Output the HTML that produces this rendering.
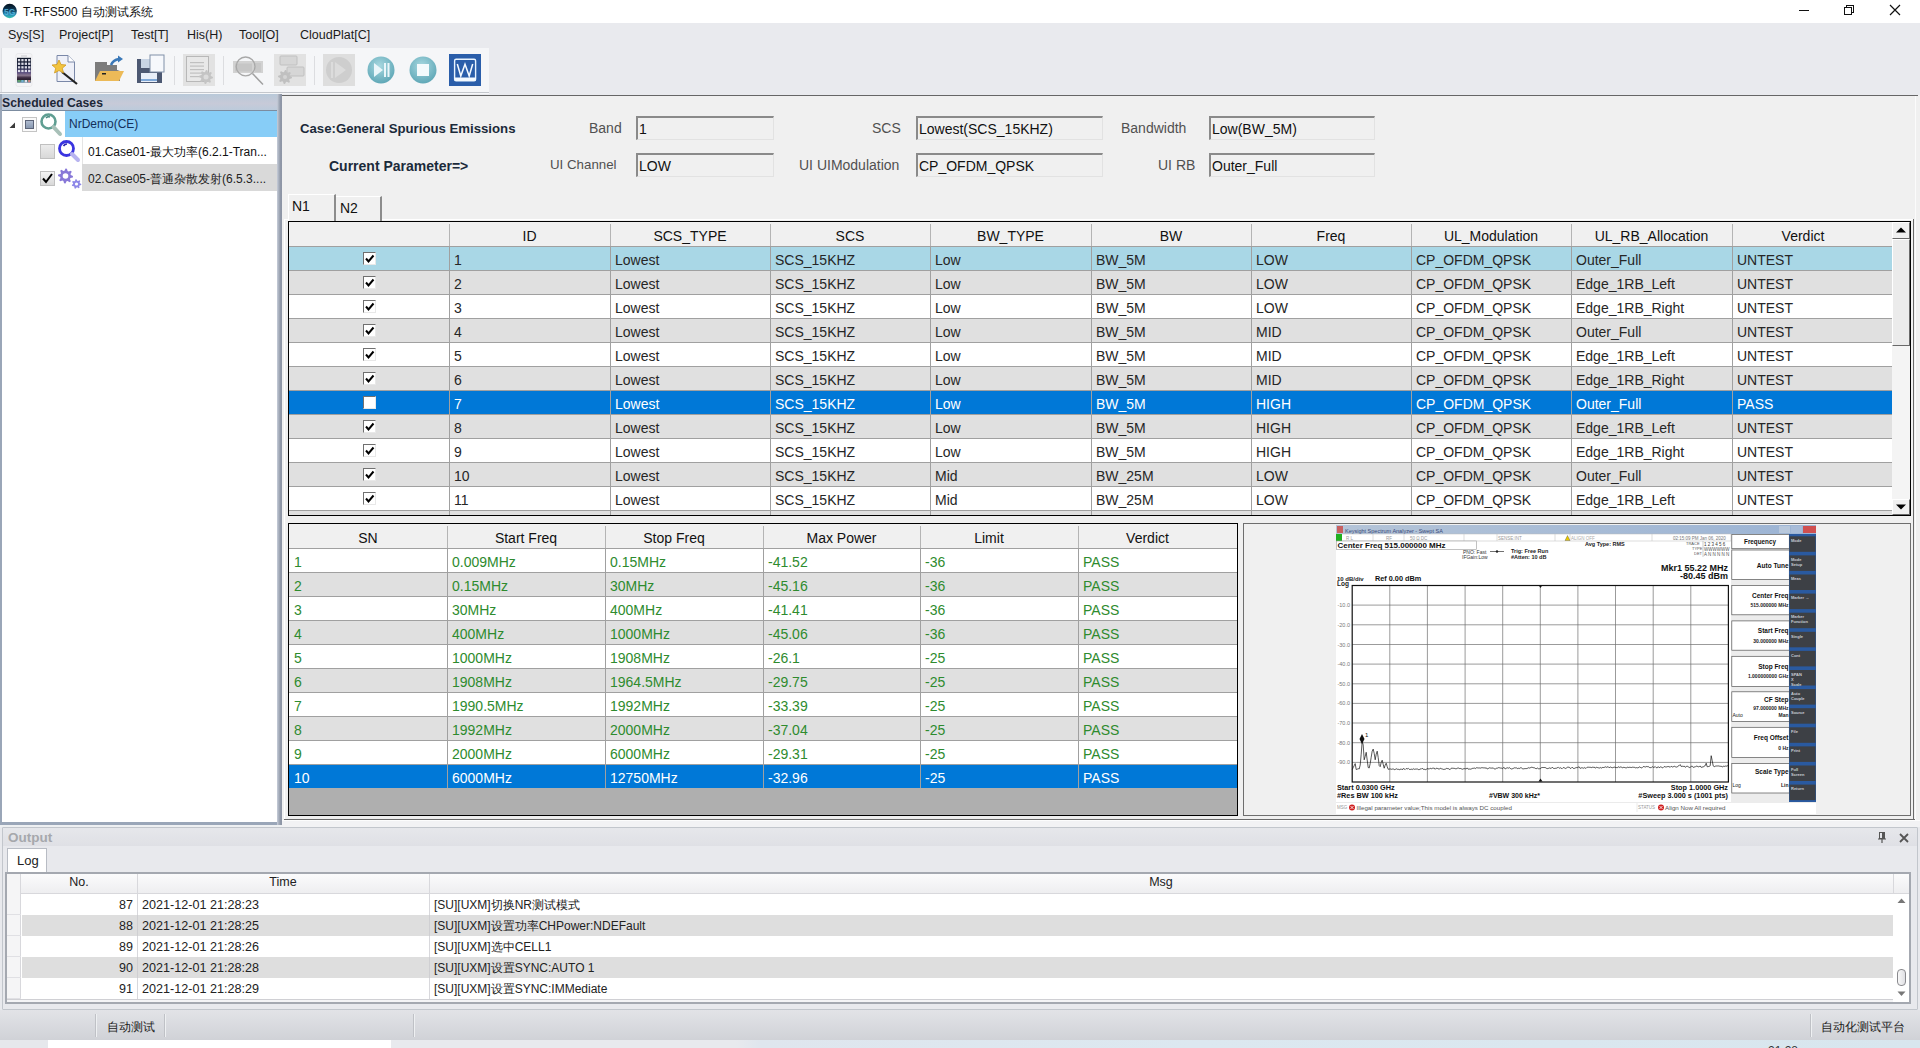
<!DOCTYPE html>
<html><head><meta charset="utf-8"><title>T-RFS500</title>
<style>
*{box-sizing:border-box}
html,body{margin:0;padding:0}
body{width:1920px;height:1048px;position:relative;overflow:hidden;background:#f0f0f0;font-family:"Liberation Sans", sans-serif;color:#000}
.ab{position:absolute}
.t{position:absolute;white-space:nowrap;line-height:1}
</style></head><body>

<div class="ab" style="left:0;top:0;width:1920px;height:23px;background:#fff"></div>
<svg class="ab" style="left:2px;top:3px" width="16" height="16"><defs><linearGradient id="tig" x1="0" y1="0" x2="0" y2="1"><stop offset="0" stop-color="#04101c"/><stop offset="0.45" stop-color="#0c3c5c"/><stop offset="0.75" stop-color="#2a90b8"/><stop offset="1" stop-color="#34c4b0"/></linearGradient></defs><circle cx="7.7" cy="8" r="7.2" fill="url(#tig)"/><text x="7.7" y="11.5" font-family="Liberation Sans" font-size="8.5" font-weight="bold" fill="#5ab8e0" text-anchor="middle" opacity="0.85">5G</text></svg>
<div class="t" style="left:23px;top:6px;font-size:12px;color:#111">T-RFS500 自动测试系统</div>
<div class="ab" style="left:1799px;top:10px;width:10px;height:1px;background:#111"></div>
<div class="ab" style="left:1846px;top:5px;width:8px;height:8px;border:1px solid #111"></div>
<div class="ab" style="left:1844px;top:7px;width:8px;height:8px;border:1px solid #111;background:#fff"></div>
<svg class="ab" style="left:1889px;top:4px" width="12" height="12"><path d="M1 1L11 11M11 1L1 11" stroke="#111" stroke-width="1.2"/></svg>
<div class="ab" style="left:0;top:23px;width:1920px;height:72px;background:#e9eaee"></div>
<div class="t" style="left:8px;top:29px;font-size:12.5px;color:#1a1a1a">Sys[S]</div>
<div class="t" style="left:59px;top:29px;font-size:12.5px;color:#1a1a1a">Project[P]</div>
<div class="t" style="left:131px;top:29px;font-size:12.5px;color:#1a1a1a">Test[T]</div>
<div class="t" style="left:187px;top:29px;font-size:12.5px;color:#1a1a1a">His(H)</div>
<div class="t" style="left:239px;top:29px;font-size:12.5px;color:#1a1a1a">Tool[O]</div>
<div class="t" style="left:300px;top:29px;font-size:12.5px;color:#1a1a1a">CloudPlat[C]</div>
<div class="ab" style="left:1px;top:48px;width:488px;height:44px;background:#f5f6f8;border-left:1px solid #dcdee2"></div>
<div class="ab" style="left:0;top:92px;width:489px;height:1px;background:#c4c7cc"></div>
<div class="ab" style="left:0;top:93px;width:489px;height:1px;background:#f6f7f9"></div>
<div class="ab" style="left:0;top:94px;width:282px;height:731px;background:#9aa6b8"></div>
<div class="ab" style="left:2px;top:94px;width:276px;height:16px;background:linear-gradient(#b9c9d9,#c7cad8 60%,#bccbdb)"></div>
<div class="t" style="left:2px;top:97px;font-size:12.2px;font-weight:bold;color:#1c2838">Scheduled Cases</div>
<div class="ab" style="left:2px;top:110px;width:276px;height:1px;background:#7c8ca0"></div>
<div class="ab" style="left:2px;top:111px;width:275px;height:711px;background:#fff"></div>
<div class="ab" style="left:277px;top:94px;width:5px;height:731px;background:linear-gradient(90deg,#c8ceda,#a4acba 40%,#9098a8 70%,#8c94a4)"></div>
<svg class="ab" style="left:9px;top:122px" width="7" height="7"><path d="M0.5 6L6 0.5L6 6Z" fill="#3a3a3a"/></svg>
<div class="ab" style="left:22px;top:117px;width:15px;height:15px;background:#fafafa;border:1px solid #c4c4c4"></div>
<div class="ab" style="left:25px;top:120px;width:9px;height:9px;background:linear-gradient(#b0bcd0,#8898b0);border:1px solid #5c6478"></div>
<svg class="ab" style="left:39px;top:112px" width="25" height="26"><circle cx="9.5" cy="9.5" r="7" stroke="#5f9e92" stroke-width="2.6" fill="#fff"/><path d="M7 6A4 4 0 0 1 11 5" stroke="#4a8a80" stroke-width="1.5" fill="none"/><path d="M14.5 15L21 22" stroke="#a8c0b8" stroke-width="4" stroke-linecap="round"/></svg>
<div class="ab" style="left:65px;top:111px;width:212px;height:26px;background:#87cdf7"></div>
<div class="t" style="left:69px;top:118px;font-size:12px;color:#14305a">NrDemo(CE)</div>
<div class="ab" style="left:40px;top:144px;width:15px;height:15px;background:linear-gradient(#ececec,#d8d8d8);border:1px solid #c0c0c0"></div>
<svg class="ab" style="left:57px;top:139px" width="25" height="25"><circle cx="9.5" cy="9.5" r="7" stroke="#3a34e0" stroke-width="2.8" fill="#fff"/><path d="M6.5 7A4 4 0 0 1 10 5" stroke="#2a24b0" stroke-width="1.6" fill="none"/><path d="M15 15L21 21" stroke="#b8b4f0" stroke-width="4" stroke-linecap="round"/></svg>
<div class="ab" style="left:82px;top:137px;width:1px;height:27px;background:#e4e4e4"></div>
<div class="t" style="left:88px;top:146px;font-size:12px;color:#111">01.Case01-最大功率(6.2.1-Tran...</div>
<div class="ab" style="left:40px;top:171px;width:15px;height:15px;background:linear-gradient(#f4f4f4,#d8d8d8);border:1px solid #c0c0c0"></div>
<svg class="ab" style="left:41px;top:172px" width="13" height="13"><path d="M2 6.5L5 10L11 2" stroke="#000" stroke-width="2" fill="none"/></svg>
<svg class="ab" style="left:56px;top:166px" width="26" height="26"><polygon points="17.00,10.00 16.86,11.46 14.49,12.07 13.99,13.00 14.80,15.30 13.67,16.24 11.57,14.99 10.55,15.30 9.50,17.50 8.04,17.36 7.43,14.99 6.50,14.49 4.20,15.30 3.26,14.17 4.51,12.07 4.20,11.05 2.00,10.00 2.14,8.54 4.51,7.93 5.01,7.00 4.20,4.70 5.33,3.76 7.43,5.01 8.45,4.70 9.50,2.50 10.96,2.64 11.57,5.01 12.50,5.51 14.80,4.70 15.74,5.83 14.49,7.93 14.80,8.95" fill="#8878d8"/><circle cx="9.5" cy="10" r="2.8" fill="#fff"/><polygon points="25.30,18.00 25.18,19.07 23.61,19.50 23.20,20.15 23.49,21.75 22.58,22.32 21.27,21.37 20.50,21.46 19.43,22.68 18.42,22.32 18.35,20.70 17.80,20.15 16.18,20.08 15.82,19.07 17.04,18.00 17.13,17.23 16.18,15.92 16.75,15.01 18.35,15.30 19.00,14.89 19.43,13.32 20.50,13.20 21.27,14.63 22.00,14.89 23.49,14.25 24.25,15.01 23.61,16.50 23.87,17.23" fill="#8e88e8"/><circle cx="20.5" cy="18" r="1.6" fill="#fff"/></svg>
<div class="ab" style="left:82px;top:164px;width:195px;height:27px;background:#d9d9d9"></div>
<div class="t" style="left:88px;top:173px;font-size:12px;color:#222">02.Case05-普通杂散发射(6.5.3....</div>
<svg class="ab" style="left:15px;top:52px" width="18" height="36"><defs><linearGradient id="phg" x1="0" y1="0" x2="0" y2="1"><stop offset="0" stop-color="#101828"/><stop offset="0.4" stop-color="#1c2240"/><stop offset="0.58" stop-color="#54487a"/><stop offset="0.7" stop-color="#8a7890"/><stop offset="0.8" stop-color="#3a2a40"/><stop offset="0.88" stop-color="#2a2030"/><stop offset="0.9" stop-color="#4a7a60"/><stop offset="1" stop-color="#7a90b0"/></linearGradient></defs><rect x="1" y="1.5" width="16" height="33" rx="2" fill="#f4f4f6" stroke="#e2e2e6" stroke-width="0.6"/><rect x="6" y="3.5" width="6" height="1" fill="#c8c8cc"/><rect x="2" y="5.8" width="14" height="25" fill="url(#phg)"/><rect x="2.9" y="7.0" width="2.3" height="2.3" fill="#f0f0f8" opacity="0.9"/><rect x="2.9" y="10.6" width="2.3" height="2.3" fill="#f0f0f8" opacity="0.9"/><rect x="2.9" y="14.2" width="2.3" height="2.3" fill="#f0f0f8" opacity="0.9"/><rect x="2.9" y="17.8" width="2.3" height="2.3" fill="#f0f0f8" opacity="0.9"/><rect x="6.3" y="7.0" width="2.3" height="2.3" fill="#f0f0f8" opacity="0.9"/><rect x="6.3" y="10.6" width="2.3" height="2.3" fill="#f0f0f8" opacity="0.9"/><rect x="6.3" y="14.2" width="2.3" height="2.3" fill="#f0f0f8" opacity="0.9"/><rect x="6.3" y="17.8" width="2.3" height="2.3" fill="#f0f0f8" opacity="0.9"/><rect x="9.7" y="7.0" width="2.3" height="2.3" fill="#f0f0f8" opacity="0.9"/><rect x="9.7" y="10.6" width="2.3" height="2.3" fill="#f0f0f8" opacity="0.9"/><rect x="9.7" y="14.2" width="2.3" height="2.3" fill="#f0f0f8" opacity="0.9"/><rect x="9.7" y="17.8" width="2.3" height="2.3" fill="#f0f0f8" opacity="0.9"/><rect x="13.1" y="7.0" width="2.3" height="2.3" fill="#f0f0f8" opacity="0.9"/><rect x="13.1" y="10.6" width="2.3" height="2.3" fill="#f0f0f8" opacity="0.9"/><rect x="13.1" y="14.2" width="2.3" height="2.3" fill="#f0f0f8" opacity="0.9"/><rect x="13.1" y="17.8" width="2.3" height="2.3" fill="#f0f0f8" opacity="0.9"/><rect x="2.9" y="28" width="2.3" height="2.3" fill="#60a070"/><rect x="6.3" y="28" width="2.3" height="2.3" fill="#70b0d0"/><rect x="9.7" y="28" width="2.3" height="2.3" fill="#e0e0f0"/><rect x="13.1" y="28" width="2.3" height="2.3" fill="#d08080"/></svg>
<svg class="ab" style="left:50px;top:53px" width="32" height="32"><path d="M7 2.5H18L24.5 9V28.5H7Z" fill="#eef0f8" stroke="#7a88a8" stroke-width="1"/><path d="M18 2.5V9H24.5" fill="#fff" stroke="#7a88a8" stroke-width="1"/><path d="M12 19L27 31" stroke="#222" stroke-width="2.2"/><path d="M9 7L11 11.5L16 12L12.3 15.2L13.5 20L9 17.5L4.5 20L5.7 15.2L2 12L7 11.5Z" fill="#f2c440" stroke="#d09a20" stroke-width="0.8"/></svg>
<svg class="ab" style="left:94px;top:54px" width="32" height="30"><path d="M1 8H13V11H23V17H1Z" fill="#7c7c7c"/><path d="M1 8V27H26V17Z" fill="#7c7c7c"/><path d="M1 27L6 17H30L25 27Z" fill="#ecba58"/><rect x="8" y="19" width="4" height="1.5" fill="#222"/><path d="M17 11Q19 6 25 5" stroke="#3a78b8" stroke-width="2.6" fill="none"/><path d="M24 1.5L29 5L24 8.5Z" fill="#3a78b8"/></svg>
<svg class="ab" style="left:136px;top:54px" width="30" height="30"><path d="M1 5H21L26 10V29H1Z" fill="#4c5872"/><rect x="5" y="5" width="12" height="9" fill="#c8d4e4"/><rect x="5" y="19" width="16" height="9" fill="#e8eef8"/><rect x="5" y="25" width="16" height="2" fill="#7ea8d8"/><rect x="14" y="1" width="14" height="17" fill="#f6f8fc" stroke="#8090a8" stroke-width="1"/></svg>
<div class="ab" style="left:174px;top:56px;width:1px;height:29px;background:#dcdde0"></div>
<div class="ab" style="left:223px;top:56px;width:1px;height:29px;background:#dcdde0"></div>
<div class="ab" style="left:314px;top:56px;width:1px;height:29px;background:#dcdde0"></div>
<svg class="ab" style="left:183px;top:54px" width="32" height="32"><rect x="0" y="0" width="32" height="32" fill="#e2e2e2"/><rect x="3.5" y="2.5" width="22" height="25" fill="#e8e8e8" stroke="#b8b8b8"/><rect x="7" y="8.0" width="14" height="1.2" fill="#c0c0c0"/><rect x="7" y="11.5" width="14" height="1.2" fill="#c0c0c0"/><rect x="7" y="15.0" width="14" height="1.2" fill="#c0c0c0"/><rect x="7" y="18.5" width="14" height="1.2" fill="#c0c0c0"/><rect x="7" y="22.0" width="14" height="1.2" fill="#c0c0c0"/><polygon points="30.00,23.00 29.87,24.37 27.66,24.93 27.19,25.80 27.95,27.95 26.89,28.82 24.93,27.66 23.98,27.94 23.00,30.00 21.63,29.87 21.07,27.66 20.20,27.19 18.05,27.95 17.18,26.89 18.34,24.93 18.06,23.98 16.00,23.00 16.13,21.63 18.34,21.07 18.81,20.20 18.05,18.05 19.11,17.18 21.07,18.34 22.02,18.06 23.00,16.00 24.37,16.13 24.93,18.34 25.80,18.81 27.95,18.05 28.82,19.11 27.66,21.07 27.94,22.02" fill="#c4c4c4"/><circle cx="23" cy="23" r="2.5" fill="#dcdcdc"/></svg>
<svg class="ab" style="left:232px;top:54px" width="32" height="32"><rect x="1" y="7" width="30" height="12" fill="#d2d2d2"/><rect x="3" y="9.5" width="17" height="8" fill="#c6c6c6"/><rect x="23" y="9" width="6" height="9" fill="#c8c8c8"/><circle cx="13.6" cy="12.4" r="9.4" stroke="#a8a8a8" stroke-width="1.3" fill="none"/><path d="M20.5 19.5L31 30.5" stroke="#a0a0a0" stroke-width="1.5"/></svg>
<svg class="ab" style="left:274px;top:54px" width="32" height="32"><rect x="0" y="0" width="32" height="32" fill="#e2e2e2"/><rect x="6" y="2" width="17" height="9" rx="1" fill="#d6d6d6" stroke="#c0c0c0"/><rect x="13" y="13" width="17" height="9" rx="1" fill="#d6d6d6" stroke="#c0c0c0"/><polygon points="18.00,23.00 17.87,24.37 15.66,24.93 15.19,25.80 15.95,27.95 14.89,28.82 12.93,27.66 11.98,27.94 11.00,30.00 9.63,29.87 9.07,27.66 8.20,27.19 6.05,27.95 5.18,26.89 6.34,24.93 6.06,23.98 4.00,23.00 4.13,21.63 6.34,21.07 6.81,20.20 6.05,18.05 7.11,17.18 9.07,18.34 10.02,18.06 11.00,16.00 12.37,16.13 12.93,18.34 13.80,18.81 15.95,18.05 16.82,19.11 15.66,21.07 15.94,22.02" fill="#c0c0c0"/><circle cx="11" cy="23" r="2" fill="#d4d4d4"/></svg>
<svg class="ab" style="left:323px;top:54px" width="32" height="32"><rect x="0" y="0" width="32" height="32" fill="#dedede"/><circle cx="16" cy="16" r="13" fill="#cecece"/><rect x="8" y="8" width="2" height="16" fill="#dcdcdc"/><path d="M12 8L23 16L12 24Z" fill="#dcdcdc"/></svg>
<svg class="ab" style="left:366px;top:55px" width="30" height="30"><defs><radialGradient id="tg" cx="0.45" cy="0.35" r="0.7"><stop offset="0" stop-color="#a8d8e0"/><stop offset="1" stop-color="#5aa4b4"/></radialGradient></defs><circle cx="15" cy="15" r="13.5" fill="url(#tg)"/><path d="M8 8L17 15L8 22Z" fill="#eaf6fa"/><rect x="18" y="8" width="2" height="14" fill="#eaf6fa"/><rect x="21.5" y="8" width="2" height="14" fill="#eaf6fa"/></svg>
<svg class="ab" style="left:408px;top:55px" width="30" height="30"><circle cx="15" cy="15" r="13.5" fill="url(#tg)"/><rect x="9" y="9" width="12" height="12" fill="#f4fafc"/></svg>
<svg class="ab" style="left:449px;top:54px" width="32" height="32"><rect x="0" y="0" width="32" height="32" fill="#2a5eaa"/><rect x="5.6" y="5.2" width="21" height="21.6" rx="1.5" fill="none" stroke="#e8f4ff" stroke-width="1.4"/><rect x="5.6" y="23.5" width="21" height="3.3" fill="#f4faff"/><path d="M8.3 10L11.8 22L16 10.2L20.2 22L23.7 10" stroke="#f4faff" stroke-width="1.5" fill="none"/></svg>
<div class="ab" style="left:282px;top:95px;width:1636px;height:732px;background:#f0f0f0;border-top:1px solid #666"></div>
<div class="ab" style="left:284px;top:219px;width:1630px;height:1px;background:#fff"></div>
<div class="ab" style="left:284px;top:219px;width:1px;height:600px;background:#fff"></div>
<div class="ab" style="left:1915px;top:96px;width:1px;height:724px;background:#fbfbfb"></div>
<div class="t" style="left:300px;top:122px;font-size:13.2px;font-weight:bold;color:#1b2a3a">Case:General Spurious Emissions</div>
<div class="t" style="left:329px;top:159px;font-size:14px;font-weight:bold;color:#1b2a3a">Current Parameter=&gt;</div>
<div class="t" style="left:589px;top:121px;font-size:14px;font-weight:normal;color:#505050">Band</div>
<div class="t" style="left:550px;top:158px;font-size:13.3px;font-weight:normal;color:#505050">UI Channel</div>
<div class="t" style="left:872px;top:121px;font-size:14px;font-weight:normal;color:#505050">SCS</div>
<div class="t" style="left:799px;top:158px;font-size:14px;font-weight:normal;color:#505050">UI UIModulation</div>
<div class="t" style="left:1121px;top:121px;font-size:14px;font-weight:normal;color:#505050">Bandwidth</div>
<div class="t" style="left:1158px;top:158px;font-size:14px;font-weight:normal;color:#505050">UI RB</div>
<div class="ab" style="left:636px;top:116px;width:138px;height:24px;background:#f0f0f0;border-top:2px solid #8a8a8a;border-left:2px solid #8a8a8a;border-right:1px solid #e2e2e2;border-bottom:1px solid #e2e2e2"></div>
<div class="t" style="left:639px;top:122px;font-size:14px;color:#111">1</div>
<div class="ab" style="left:636px;top:153px;width:138px;height:24px;background:#f0f0f0;border-top:2px solid #8a8a8a;border-left:2px solid #8a8a8a;border-right:1px solid #e2e2e2;border-bottom:1px solid #e2e2e2"></div>
<div class="t" style="left:639px;top:159px;font-size:14px;color:#111">LOW</div>
<div class="ab" style="left:916px;top:116px;width:187px;height:24px;background:#f0f0f0;border-top:2px solid #8a8a8a;border-left:2px solid #8a8a8a;border-right:1px solid #e2e2e2;border-bottom:1px solid #e2e2e2"></div>
<div class="t" style="left:919px;top:122px;font-size:14px;color:#111">Lowest(SCS_15KHZ)</div>
<div class="ab" style="left:916px;top:153px;width:187px;height:24px;background:#f0f0f0;border-top:2px solid #8a8a8a;border-left:2px solid #8a8a8a;border-right:1px solid #e2e2e2;border-bottom:1px solid #e2e2e2"></div>
<div class="t" style="left:919px;top:159px;font-size:14px;color:#111">CP_OFDM_QPSK</div>
<div class="ab" style="left:1209px;top:116px;width:166px;height:24px;background:#f0f0f0;border-top:2px solid #8a8a8a;border-left:2px solid #8a8a8a;border-right:1px solid #e2e2e2;border-bottom:1px solid #e2e2e2"></div>
<div class="t" style="left:1212px;top:122px;font-size:14px;color:#111">Low(BW_5M)</div>
<div class="ab" style="left:1209px;top:153px;width:166px;height:24px;background:#f0f0f0;border-top:2px solid #8a8a8a;border-left:2px solid #8a8a8a;border-right:1px solid #e2e2e2;border-bottom:1px solid #e2e2e2"></div>
<div class="t" style="left:1212px;top:159px;font-size:14px;color:#111">Outer_Full</div>
<div class="ab" style="left:288px;top:194px;width:48px;height:28px;background:#f0f0f0;border-top:1px solid #fff;border-left:1px solid #fff;border-right:2px solid #8c8c8c"></div>
<div class="t" style="left:292px;top:199px;font-size:14px;color:#111">N1</div>
<div class="ab" style="left:336px;top:196px;width:46px;height:25px;background:#f0f0f0;border-top:1px solid #fff;border-right:2px solid #8c8c8c"></div>
<div class="t" style="left:340px;top:201px;font-size:14px;color:#111">N2</div>
<div class="ab" style="left:288px;top:221px;width:1623px;height:295px;border:1px solid #000;background:#e0e0e0"></div>
<div class="ab" style="left:289px;top:222px;width:1603px;height:24px;background:#f0f0f0"></div>
<div class="ab" style="left:449px;top:224px;width:1px;height:22px;background:#b4b4b4"></div>
<div class="t" style="left:449px;width:161px;text-align:center;top:229px;font-size:14px;color:#111">ID</div>
<div class="ab" style="left:610px;top:224px;width:1px;height:22px;background:#b4b4b4"></div>
<div class="t" style="left:610px;width:160px;text-align:center;top:229px;font-size:14px;color:#111">SCS_TYPE</div>
<div class="ab" style="left:770px;top:224px;width:1px;height:22px;background:#b4b4b4"></div>
<div class="t" style="left:770px;width:160px;text-align:center;top:229px;font-size:14px;color:#111">SCS</div>
<div class="ab" style="left:930px;top:224px;width:1px;height:22px;background:#b4b4b4"></div>
<div class="t" style="left:930px;width:161px;text-align:center;top:229px;font-size:14px;color:#111">BW_TYPE</div>
<div class="ab" style="left:1091px;top:224px;width:1px;height:22px;background:#b4b4b4"></div>
<div class="t" style="left:1091px;width:160px;text-align:center;top:229px;font-size:14px;color:#111">BW</div>
<div class="ab" style="left:1251px;top:224px;width:1px;height:22px;background:#b4b4b4"></div>
<div class="t" style="left:1251px;width:160px;text-align:center;top:229px;font-size:14px;color:#111">Freq</div>
<div class="ab" style="left:1411px;top:224px;width:1px;height:22px;background:#b4b4b4"></div>
<div class="t" style="left:1411px;width:160px;text-align:center;top:229px;font-size:14px;color:#111">UL_Modulation</div>
<div class="ab" style="left:1571px;top:224px;width:1px;height:22px;background:#b4b4b4"></div>
<div class="t" style="left:1571px;width:161px;text-align:center;top:229px;font-size:14px;color:#111">UL_RB_Allocation</div>
<div class="ab" style="left:1732px;top:224px;width:1px;height:22px;background:#b4b4b4"></div>
<div class="t" style="left:1723px;width:160px;text-align:center;top:229px;font-size:14px;color:#111">Verdict</div>
<div class="ab" style="left:289px;top:246px;width:1603px;height:24px;background:#a9d7e6;border-top:1px solid #a0a0a0"></div>
<div class="ab" style="left:449px;top:246px;width:1px;height:24px;background:#a0a0a0"></div>
<div class="ab" style="left:610px;top:246px;width:1px;height:24px;background:#a0a0a0"></div>
<div class="ab" style="left:770px;top:246px;width:1px;height:24px;background:#a0a0a0"></div>
<div class="ab" style="left:930px;top:246px;width:1px;height:24px;background:#a0a0a0"></div>
<div class="ab" style="left:1091px;top:246px;width:1px;height:24px;background:#a0a0a0"></div>
<div class="ab" style="left:1251px;top:246px;width:1px;height:24px;background:#a0a0a0"></div>
<div class="ab" style="left:1411px;top:246px;width:1px;height:24px;background:#a0a0a0"></div>
<div class="ab" style="left:1571px;top:246px;width:1px;height:24px;background:#a0a0a0"></div>
<div class="ab" style="left:1732px;top:246px;width:1px;height:24px;background:#a0a0a0"></div>
<div class="ab" style="left:363px;top:252px;width:13px;height:13px;background:#fff;border-top:1px solid #707070;border-left:1px solid #707070;border-right:1px solid #e8e8e8;border-bottom:1px solid #e8e8e8"></div>
<svg class="ab" style="left:364px;top:253px" width="11" height="11"><path d="M2 5.5L4.5 8.5L9.5 2.5" stroke="#000" stroke-width="2" fill="none"/></svg>
<div class="t" style="left:454px;top:253px;font-size:14px;color:#262626">1</div>
<div class="t" style="left:615px;top:253px;font-size:14px;color:#262626">Lowest</div>
<div class="t" style="left:775px;top:253px;font-size:14px;color:#262626">SCS_15KHZ</div>
<div class="t" style="left:935px;top:253px;font-size:14px;color:#262626">Low</div>
<div class="t" style="left:1096px;top:253px;font-size:14px;color:#262626">BW_5M</div>
<div class="t" style="left:1256px;top:253px;font-size:14px;color:#262626">LOW</div>
<div class="t" style="left:1416px;top:253px;font-size:14px;color:#262626">CP_OFDM_QPSK</div>
<div class="t" style="left:1576px;top:253px;font-size:14px;color:#262626">Outer_Full</div>
<div class="t" style="left:1737px;top:253px;font-size:14px;color:#262626">UNTEST</div>
<div class="ab" style="left:289px;top:270px;width:1603px;height:24px;background:#e0e0e0;border-top:1px solid #a0a0a0"></div>
<div class="ab" style="left:449px;top:270px;width:1px;height:24px;background:#a0a0a0"></div>
<div class="ab" style="left:610px;top:270px;width:1px;height:24px;background:#a0a0a0"></div>
<div class="ab" style="left:770px;top:270px;width:1px;height:24px;background:#a0a0a0"></div>
<div class="ab" style="left:930px;top:270px;width:1px;height:24px;background:#a0a0a0"></div>
<div class="ab" style="left:1091px;top:270px;width:1px;height:24px;background:#a0a0a0"></div>
<div class="ab" style="left:1251px;top:270px;width:1px;height:24px;background:#a0a0a0"></div>
<div class="ab" style="left:1411px;top:270px;width:1px;height:24px;background:#a0a0a0"></div>
<div class="ab" style="left:1571px;top:270px;width:1px;height:24px;background:#a0a0a0"></div>
<div class="ab" style="left:1732px;top:270px;width:1px;height:24px;background:#a0a0a0"></div>
<div class="ab" style="left:363px;top:276px;width:13px;height:13px;background:#fff;border-top:1px solid #707070;border-left:1px solid #707070;border-right:1px solid #e8e8e8;border-bottom:1px solid #e8e8e8"></div>
<svg class="ab" style="left:364px;top:277px" width="11" height="11"><path d="M2 5.5L4.5 8.5L9.5 2.5" stroke="#000" stroke-width="2" fill="none"/></svg>
<div class="t" style="left:454px;top:277px;font-size:14px;color:#262626">2</div>
<div class="t" style="left:615px;top:277px;font-size:14px;color:#262626">Lowest</div>
<div class="t" style="left:775px;top:277px;font-size:14px;color:#262626">SCS_15KHZ</div>
<div class="t" style="left:935px;top:277px;font-size:14px;color:#262626">Low</div>
<div class="t" style="left:1096px;top:277px;font-size:14px;color:#262626">BW_5M</div>
<div class="t" style="left:1256px;top:277px;font-size:14px;color:#262626">LOW</div>
<div class="t" style="left:1416px;top:277px;font-size:14px;color:#262626">CP_OFDM_QPSK</div>
<div class="t" style="left:1576px;top:277px;font-size:14px;color:#262626">Edge_1RB_Left</div>
<div class="t" style="left:1737px;top:277px;font-size:14px;color:#262626">UNTEST</div>
<div class="ab" style="left:289px;top:294px;width:1603px;height:24px;background:#ffffff;border-top:1px solid #a0a0a0"></div>
<div class="ab" style="left:449px;top:294px;width:1px;height:24px;background:#a0a0a0"></div>
<div class="ab" style="left:610px;top:294px;width:1px;height:24px;background:#a0a0a0"></div>
<div class="ab" style="left:770px;top:294px;width:1px;height:24px;background:#a0a0a0"></div>
<div class="ab" style="left:930px;top:294px;width:1px;height:24px;background:#a0a0a0"></div>
<div class="ab" style="left:1091px;top:294px;width:1px;height:24px;background:#a0a0a0"></div>
<div class="ab" style="left:1251px;top:294px;width:1px;height:24px;background:#a0a0a0"></div>
<div class="ab" style="left:1411px;top:294px;width:1px;height:24px;background:#a0a0a0"></div>
<div class="ab" style="left:1571px;top:294px;width:1px;height:24px;background:#a0a0a0"></div>
<div class="ab" style="left:1732px;top:294px;width:1px;height:24px;background:#a0a0a0"></div>
<div class="ab" style="left:363px;top:300px;width:13px;height:13px;background:#fff;border-top:1px solid #707070;border-left:1px solid #707070;border-right:1px solid #e8e8e8;border-bottom:1px solid #e8e8e8"></div>
<svg class="ab" style="left:364px;top:301px" width="11" height="11"><path d="M2 5.5L4.5 8.5L9.5 2.5" stroke="#000" stroke-width="2" fill="none"/></svg>
<div class="t" style="left:454px;top:301px;font-size:14px;color:#262626">3</div>
<div class="t" style="left:615px;top:301px;font-size:14px;color:#262626">Lowest</div>
<div class="t" style="left:775px;top:301px;font-size:14px;color:#262626">SCS_15KHZ</div>
<div class="t" style="left:935px;top:301px;font-size:14px;color:#262626">Low</div>
<div class="t" style="left:1096px;top:301px;font-size:14px;color:#262626">BW_5M</div>
<div class="t" style="left:1256px;top:301px;font-size:14px;color:#262626">LOW</div>
<div class="t" style="left:1416px;top:301px;font-size:14px;color:#262626">CP_OFDM_QPSK</div>
<div class="t" style="left:1576px;top:301px;font-size:14px;color:#262626">Edge_1RB_Right</div>
<div class="t" style="left:1737px;top:301px;font-size:14px;color:#262626">UNTEST</div>
<div class="ab" style="left:289px;top:318px;width:1603px;height:24px;background:#e0e0e0;border-top:1px solid #a0a0a0"></div>
<div class="ab" style="left:449px;top:318px;width:1px;height:24px;background:#a0a0a0"></div>
<div class="ab" style="left:610px;top:318px;width:1px;height:24px;background:#a0a0a0"></div>
<div class="ab" style="left:770px;top:318px;width:1px;height:24px;background:#a0a0a0"></div>
<div class="ab" style="left:930px;top:318px;width:1px;height:24px;background:#a0a0a0"></div>
<div class="ab" style="left:1091px;top:318px;width:1px;height:24px;background:#a0a0a0"></div>
<div class="ab" style="left:1251px;top:318px;width:1px;height:24px;background:#a0a0a0"></div>
<div class="ab" style="left:1411px;top:318px;width:1px;height:24px;background:#a0a0a0"></div>
<div class="ab" style="left:1571px;top:318px;width:1px;height:24px;background:#a0a0a0"></div>
<div class="ab" style="left:1732px;top:318px;width:1px;height:24px;background:#a0a0a0"></div>
<div class="ab" style="left:363px;top:324px;width:13px;height:13px;background:#fff;border-top:1px solid #707070;border-left:1px solid #707070;border-right:1px solid #e8e8e8;border-bottom:1px solid #e8e8e8"></div>
<svg class="ab" style="left:364px;top:325px" width="11" height="11"><path d="M2 5.5L4.5 8.5L9.5 2.5" stroke="#000" stroke-width="2" fill="none"/></svg>
<div class="t" style="left:454px;top:325px;font-size:14px;color:#262626">4</div>
<div class="t" style="left:615px;top:325px;font-size:14px;color:#262626">Lowest</div>
<div class="t" style="left:775px;top:325px;font-size:14px;color:#262626">SCS_15KHZ</div>
<div class="t" style="left:935px;top:325px;font-size:14px;color:#262626">Low</div>
<div class="t" style="left:1096px;top:325px;font-size:14px;color:#262626">BW_5M</div>
<div class="t" style="left:1256px;top:325px;font-size:14px;color:#262626">MID</div>
<div class="t" style="left:1416px;top:325px;font-size:14px;color:#262626">CP_OFDM_QPSK</div>
<div class="t" style="left:1576px;top:325px;font-size:14px;color:#262626">Outer_Full</div>
<div class="t" style="left:1737px;top:325px;font-size:14px;color:#262626">UNTEST</div>
<div class="ab" style="left:289px;top:342px;width:1603px;height:24px;background:#ffffff;border-top:1px solid #a0a0a0"></div>
<div class="ab" style="left:449px;top:342px;width:1px;height:24px;background:#a0a0a0"></div>
<div class="ab" style="left:610px;top:342px;width:1px;height:24px;background:#a0a0a0"></div>
<div class="ab" style="left:770px;top:342px;width:1px;height:24px;background:#a0a0a0"></div>
<div class="ab" style="left:930px;top:342px;width:1px;height:24px;background:#a0a0a0"></div>
<div class="ab" style="left:1091px;top:342px;width:1px;height:24px;background:#a0a0a0"></div>
<div class="ab" style="left:1251px;top:342px;width:1px;height:24px;background:#a0a0a0"></div>
<div class="ab" style="left:1411px;top:342px;width:1px;height:24px;background:#a0a0a0"></div>
<div class="ab" style="left:1571px;top:342px;width:1px;height:24px;background:#a0a0a0"></div>
<div class="ab" style="left:1732px;top:342px;width:1px;height:24px;background:#a0a0a0"></div>
<div class="ab" style="left:363px;top:348px;width:13px;height:13px;background:#fff;border-top:1px solid #707070;border-left:1px solid #707070;border-right:1px solid #e8e8e8;border-bottom:1px solid #e8e8e8"></div>
<svg class="ab" style="left:364px;top:349px" width="11" height="11"><path d="M2 5.5L4.5 8.5L9.5 2.5" stroke="#000" stroke-width="2" fill="none"/></svg>
<div class="t" style="left:454px;top:349px;font-size:14px;color:#262626">5</div>
<div class="t" style="left:615px;top:349px;font-size:14px;color:#262626">Lowest</div>
<div class="t" style="left:775px;top:349px;font-size:14px;color:#262626">SCS_15KHZ</div>
<div class="t" style="left:935px;top:349px;font-size:14px;color:#262626">Low</div>
<div class="t" style="left:1096px;top:349px;font-size:14px;color:#262626">BW_5M</div>
<div class="t" style="left:1256px;top:349px;font-size:14px;color:#262626">MID</div>
<div class="t" style="left:1416px;top:349px;font-size:14px;color:#262626">CP_OFDM_QPSK</div>
<div class="t" style="left:1576px;top:349px;font-size:14px;color:#262626">Edge_1RB_Left</div>
<div class="t" style="left:1737px;top:349px;font-size:14px;color:#262626">UNTEST</div>
<div class="ab" style="left:289px;top:366px;width:1603px;height:24px;background:#e0e0e0;border-top:1px solid #a0a0a0"></div>
<div class="ab" style="left:449px;top:366px;width:1px;height:24px;background:#a0a0a0"></div>
<div class="ab" style="left:610px;top:366px;width:1px;height:24px;background:#a0a0a0"></div>
<div class="ab" style="left:770px;top:366px;width:1px;height:24px;background:#a0a0a0"></div>
<div class="ab" style="left:930px;top:366px;width:1px;height:24px;background:#a0a0a0"></div>
<div class="ab" style="left:1091px;top:366px;width:1px;height:24px;background:#a0a0a0"></div>
<div class="ab" style="left:1251px;top:366px;width:1px;height:24px;background:#a0a0a0"></div>
<div class="ab" style="left:1411px;top:366px;width:1px;height:24px;background:#a0a0a0"></div>
<div class="ab" style="left:1571px;top:366px;width:1px;height:24px;background:#a0a0a0"></div>
<div class="ab" style="left:1732px;top:366px;width:1px;height:24px;background:#a0a0a0"></div>
<div class="ab" style="left:363px;top:372px;width:13px;height:13px;background:#fff;border-top:1px solid #707070;border-left:1px solid #707070;border-right:1px solid #e8e8e8;border-bottom:1px solid #e8e8e8"></div>
<svg class="ab" style="left:364px;top:373px" width="11" height="11"><path d="M2 5.5L4.5 8.5L9.5 2.5" stroke="#000" stroke-width="2" fill="none"/></svg>
<div class="t" style="left:454px;top:373px;font-size:14px;color:#262626">6</div>
<div class="t" style="left:615px;top:373px;font-size:14px;color:#262626">Lowest</div>
<div class="t" style="left:775px;top:373px;font-size:14px;color:#262626">SCS_15KHZ</div>
<div class="t" style="left:935px;top:373px;font-size:14px;color:#262626">Low</div>
<div class="t" style="left:1096px;top:373px;font-size:14px;color:#262626">BW_5M</div>
<div class="t" style="left:1256px;top:373px;font-size:14px;color:#262626">MID</div>
<div class="t" style="left:1416px;top:373px;font-size:14px;color:#262626">CP_OFDM_QPSK</div>
<div class="t" style="left:1576px;top:373px;font-size:14px;color:#262626">Edge_1RB_Right</div>
<div class="t" style="left:1737px;top:373px;font-size:14px;color:#262626">UNTEST</div>
<div class="ab" style="left:289px;top:390px;width:1603px;height:24px;background:#0078d7;border-top:1px solid #a0a0a0"></div>
<div class="ab" style="left:449px;top:390px;width:1px;height:24px;background:#a0a0a0"></div>
<div class="ab" style="left:610px;top:390px;width:1px;height:24px;background:#a0a0a0"></div>
<div class="ab" style="left:770px;top:390px;width:1px;height:24px;background:#a0a0a0"></div>
<div class="ab" style="left:930px;top:390px;width:1px;height:24px;background:#a0a0a0"></div>
<div class="ab" style="left:1091px;top:390px;width:1px;height:24px;background:#a0a0a0"></div>
<div class="ab" style="left:1251px;top:390px;width:1px;height:24px;background:#a0a0a0"></div>
<div class="ab" style="left:1411px;top:390px;width:1px;height:24px;background:#a0a0a0"></div>
<div class="ab" style="left:1571px;top:390px;width:1px;height:24px;background:#a0a0a0"></div>
<div class="ab" style="left:1732px;top:390px;width:1px;height:24px;background:#a0a0a0"></div>
<div class="ab" style="left:363px;top:396px;width:13px;height:13px;background:#fff;border-top:1px solid #707070;border-left:1px solid #707070;border-right:1px solid #e8e8e8;border-bottom:1px solid #e8e8e8"></div>
<div class="t" style="left:454px;top:397px;font-size:14px;color:#ffffff">7</div>
<div class="t" style="left:615px;top:397px;font-size:14px;color:#ffffff">Lowest</div>
<div class="t" style="left:775px;top:397px;font-size:14px;color:#ffffff">SCS_15KHZ</div>
<div class="t" style="left:935px;top:397px;font-size:14px;color:#ffffff">Low</div>
<div class="t" style="left:1096px;top:397px;font-size:14px;color:#ffffff">BW_5M</div>
<div class="t" style="left:1256px;top:397px;font-size:14px;color:#ffffff">HIGH</div>
<div class="t" style="left:1416px;top:397px;font-size:14px;color:#ffffff">CP_OFDM_QPSK</div>
<div class="t" style="left:1576px;top:397px;font-size:14px;color:#ffffff">Outer_Full</div>
<div class="t" style="left:1737px;top:397px;font-size:14px;color:#ffffff">PASS</div>
<div class="ab" style="left:289px;top:414px;width:1603px;height:24px;background:#e0e0e0;border-top:1px solid #a0a0a0"></div>
<div class="ab" style="left:449px;top:414px;width:1px;height:24px;background:#a0a0a0"></div>
<div class="ab" style="left:610px;top:414px;width:1px;height:24px;background:#a0a0a0"></div>
<div class="ab" style="left:770px;top:414px;width:1px;height:24px;background:#a0a0a0"></div>
<div class="ab" style="left:930px;top:414px;width:1px;height:24px;background:#a0a0a0"></div>
<div class="ab" style="left:1091px;top:414px;width:1px;height:24px;background:#a0a0a0"></div>
<div class="ab" style="left:1251px;top:414px;width:1px;height:24px;background:#a0a0a0"></div>
<div class="ab" style="left:1411px;top:414px;width:1px;height:24px;background:#a0a0a0"></div>
<div class="ab" style="left:1571px;top:414px;width:1px;height:24px;background:#a0a0a0"></div>
<div class="ab" style="left:1732px;top:414px;width:1px;height:24px;background:#a0a0a0"></div>
<div class="ab" style="left:363px;top:420px;width:13px;height:13px;background:#fff;border-top:1px solid #707070;border-left:1px solid #707070;border-right:1px solid #e8e8e8;border-bottom:1px solid #e8e8e8"></div>
<svg class="ab" style="left:364px;top:421px" width="11" height="11"><path d="M2 5.5L4.5 8.5L9.5 2.5" stroke="#000" stroke-width="2" fill="none"/></svg>
<div class="t" style="left:454px;top:421px;font-size:14px;color:#262626">8</div>
<div class="t" style="left:615px;top:421px;font-size:14px;color:#262626">Lowest</div>
<div class="t" style="left:775px;top:421px;font-size:14px;color:#262626">SCS_15KHZ</div>
<div class="t" style="left:935px;top:421px;font-size:14px;color:#262626">Low</div>
<div class="t" style="left:1096px;top:421px;font-size:14px;color:#262626">BW_5M</div>
<div class="t" style="left:1256px;top:421px;font-size:14px;color:#262626">HIGH</div>
<div class="t" style="left:1416px;top:421px;font-size:14px;color:#262626">CP_OFDM_QPSK</div>
<div class="t" style="left:1576px;top:421px;font-size:14px;color:#262626">Edge_1RB_Left</div>
<div class="t" style="left:1737px;top:421px;font-size:14px;color:#262626">UNTEST</div>
<div class="ab" style="left:289px;top:438px;width:1603px;height:24px;background:#ffffff;border-top:1px solid #a0a0a0"></div>
<div class="ab" style="left:449px;top:438px;width:1px;height:24px;background:#a0a0a0"></div>
<div class="ab" style="left:610px;top:438px;width:1px;height:24px;background:#a0a0a0"></div>
<div class="ab" style="left:770px;top:438px;width:1px;height:24px;background:#a0a0a0"></div>
<div class="ab" style="left:930px;top:438px;width:1px;height:24px;background:#a0a0a0"></div>
<div class="ab" style="left:1091px;top:438px;width:1px;height:24px;background:#a0a0a0"></div>
<div class="ab" style="left:1251px;top:438px;width:1px;height:24px;background:#a0a0a0"></div>
<div class="ab" style="left:1411px;top:438px;width:1px;height:24px;background:#a0a0a0"></div>
<div class="ab" style="left:1571px;top:438px;width:1px;height:24px;background:#a0a0a0"></div>
<div class="ab" style="left:1732px;top:438px;width:1px;height:24px;background:#a0a0a0"></div>
<div class="ab" style="left:363px;top:444px;width:13px;height:13px;background:#fff;border-top:1px solid #707070;border-left:1px solid #707070;border-right:1px solid #e8e8e8;border-bottom:1px solid #e8e8e8"></div>
<svg class="ab" style="left:364px;top:445px" width="11" height="11"><path d="M2 5.5L4.5 8.5L9.5 2.5" stroke="#000" stroke-width="2" fill="none"/></svg>
<div class="t" style="left:454px;top:445px;font-size:14px;color:#262626">9</div>
<div class="t" style="left:615px;top:445px;font-size:14px;color:#262626">Lowest</div>
<div class="t" style="left:775px;top:445px;font-size:14px;color:#262626">SCS_15KHZ</div>
<div class="t" style="left:935px;top:445px;font-size:14px;color:#262626">Low</div>
<div class="t" style="left:1096px;top:445px;font-size:14px;color:#262626">BW_5M</div>
<div class="t" style="left:1256px;top:445px;font-size:14px;color:#262626">HIGH</div>
<div class="t" style="left:1416px;top:445px;font-size:14px;color:#262626">CP_OFDM_QPSK</div>
<div class="t" style="left:1576px;top:445px;font-size:14px;color:#262626">Edge_1RB_Right</div>
<div class="t" style="left:1737px;top:445px;font-size:14px;color:#262626">UNTEST</div>
<div class="ab" style="left:289px;top:462px;width:1603px;height:24px;background:#e0e0e0;border-top:1px solid #a0a0a0"></div>
<div class="ab" style="left:449px;top:462px;width:1px;height:24px;background:#a0a0a0"></div>
<div class="ab" style="left:610px;top:462px;width:1px;height:24px;background:#a0a0a0"></div>
<div class="ab" style="left:770px;top:462px;width:1px;height:24px;background:#a0a0a0"></div>
<div class="ab" style="left:930px;top:462px;width:1px;height:24px;background:#a0a0a0"></div>
<div class="ab" style="left:1091px;top:462px;width:1px;height:24px;background:#a0a0a0"></div>
<div class="ab" style="left:1251px;top:462px;width:1px;height:24px;background:#a0a0a0"></div>
<div class="ab" style="left:1411px;top:462px;width:1px;height:24px;background:#a0a0a0"></div>
<div class="ab" style="left:1571px;top:462px;width:1px;height:24px;background:#a0a0a0"></div>
<div class="ab" style="left:1732px;top:462px;width:1px;height:24px;background:#a0a0a0"></div>
<div class="ab" style="left:363px;top:468px;width:13px;height:13px;background:#fff;border-top:1px solid #707070;border-left:1px solid #707070;border-right:1px solid #e8e8e8;border-bottom:1px solid #e8e8e8"></div>
<svg class="ab" style="left:364px;top:469px" width="11" height="11"><path d="M2 5.5L4.5 8.5L9.5 2.5" stroke="#000" stroke-width="2" fill="none"/></svg>
<div class="t" style="left:454px;top:469px;font-size:14px;color:#262626">10</div>
<div class="t" style="left:615px;top:469px;font-size:14px;color:#262626">Lowest</div>
<div class="t" style="left:775px;top:469px;font-size:14px;color:#262626">SCS_15KHZ</div>
<div class="t" style="left:935px;top:469px;font-size:14px;color:#262626">Mid</div>
<div class="t" style="left:1096px;top:469px;font-size:14px;color:#262626">BW_25M</div>
<div class="t" style="left:1256px;top:469px;font-size:14px;color:#262626">LOW</div>
<div class="t" style="left:1416px;top:469px;font-size:14px;color:#262626">CP_OFDM_QPSK</div>
<div class="t" style="left:1576px;top:469px;font-size:14px;color:#262626">Outer_Full</div>
<div class="t" style="left:1737px;top:469px;font-size:14px;color:#262626">UNTEST</div>
<div class="ab" style="left:289px;top:486px;width:1603px;height:24px;background:#ffffff;border-top:1px solid #a0a0a0"></div>
<div class="ab" style="left:449px;top:486px;width:1px;height:24px;background:#a0a0a0"></div>
<div class="ab" style="left:610px;top:486px;width:1px;height:24px;background:#a0a0a0"></div>
<div class="ab" style="left:770px;top:486px;width:1px;height:24px;background:#a0a0a0"></div>
<div class="ab" style="left:930px;top:486px;width:1px;height:24px;background:#a0a0a0"></div>
<div class="ab" style="left:1091px;top:486px;width:1px;height:24px;background:#a0a0a0"></div>
<div class="ab" style="left:1251px;top:486px;width:1px;height:24px;background:#a0a0a0"></div>
<div class="ab" style="left:1411px;top:486px;width:1px;height:24px;background:#a0a0a0"></div>
<div class="ab" style="left:1571px;top:486px;width:1px;height:24px;background:#a0a0a0"></div>
<div class="ab" style="left:1732px;top:486px;width:1px;height:24px;background:#a0a0a0"></div>
<div class="ab" style="left:363px;top:492px;width:13px;height:13px;background:#fff;border-top:1px solid #707070;border-left:1px solid #707070;border-right:1px solid #e8e8e8;border-bottom:1px solid #e8e8e8"></div>
<svg class="ab" style="left:364px;top:493px" width="11" height="11"><path d="M2 5.5L4.5 8.5L9.5 2.5" stroke="#000" stroke-width="2" fill="none"/></svg>
<div class="t" style="left:454px;top:493px;font-size:14px;color:#262626">11</div>
<div class="t" style="left:615px;top:493px;font-size:14px;color:#262626">Lowest</div>
<div class="t" style="left:775px;top:493px;font-size:14px;color:#262626">SCS_15KHZ</div>
<div class="t" style="left:935px;top:493px;font-size:14px;color:#262626">Mid</div>
<div class="t" style="left:1096px;top:493px;font-size:14px;color:#262626">BW_25M</div>
<div class="t" style="left:1256px;top:493px;font-size:14px;color:#262626">LOW</div>
<div class="t" style="left:1416px;top:493px;font-size:14px;color:#262626">CP_OFDM_QPSK</div>
<div class="t" style="left:1576px;top:493px;font-size:14px;color:#262626">Edge_1RB_Left</div>
<div class="t" style="left:1737px;top:493px;font-size:14px;color:#262626">UNTEST</div>
<div class="ab" style="left:289px;top:510px;width:1603px;height:5px;background:#e0e0e0;border-top:1px solid #a0a0a0"></div>
<div class="ab" style="left:449px;top:510px;width:1px;height:5px;background:#a0a0a0"></div>
<div class="ab" style="left:610px;top:510px;width:1px;height:5px;background:#a0a0a0"></div>
<div class="ab" style="left:770px;top:510px;width:1px;height:5px;background:#a0a0a0"></div>
<div class="ab" style="left:930px;top:510px;width:1px;height:5px;background:#a0a0a0"></div>
<div class="ab" style="left:1091px;top:510px;width:1px;height:5px;background:#a0a0a0"></div>
<div class="ab" style="left:1251px;top:510px;width:1px;height:5px;background:#a0a0a0"></div>
<div class="ab" style="left:1411px;top:510px;width:1px;height:5px;background:#a0a0a0"></div>
<div class="ab" style="left:1571px;top:510px;width:1px;height:5px;background:#a0a0a0"></div>
<div class="ab" style="left:1732px;top:510px;width:1px;height:5px;background:#a0a0a0"></div>
<div class="ab" style="left:1892px;top:222px;width:18px;height:293px;background:#f4f4f4"></div>
<div class="ab" style="left:1892px;top:222px;width:18px;height:17px;background:#f0f0f0;border-right:1px solid #696969;border-bottom:1px solid #696969;border-left:1px solid #fff;border-top:1px solid #fff"></div>
<svg class="ab" style="left:1896px;top:227px" width="10" height="6"><path d="M0 5.5L5 0.5L10 5.5Z" fill="#000"/></svg>
<div class="ab" style="left:1892px;top:239px;width:18px;height:107px;background:#ebebeb;border-right:1px solid #696969;border-bottom:1px solid #696969;border-left:1px solid #fff;border-top:1px solid #fff"></div>
<div class="ab" style="left:1892px;top:499px;width:18px;height:16px;background:#f0f0f0;border-right:1px solid #696969;border-bottom:1px solid #696969;border-left:1px solid #fff;border-top:1px solid #fff"></div>
<svg class="ab" style="left:1896px;top:504px" width="10" height="6"><path d="M0 0.5L5 5.5L10 0.5Z" fill="#000"/></svg>
<div class="ab" style="left:288px;top:523px;width:950px;height:293px;border:1px solid #000;background:#afafaf"></div>
<div class="ab" style="left:289px;top:524px;width:948px;height:24px;background:#f0f0f0"></div>
<div class="t" style="left:289px;width:158px;text-align:center;top:531px;font-size:14px;color:#111">SN</div>
<div class="ab" style="left:447px;top:526px;width:1px;height:22px;background:#b4b4b4"></div>
<div class="t" style="left:447px;width:158px;text-align:center;top:531px;font-size:14px;color:#111">Start Freq</div>
<div class="ab" style="left:605px;top:526px;width:1px;height:22px;background:#b4b4b4"></div>
<div class="t" style="left:595px;width:158px;text-align:center;top:531px;font-size:14px;color:#111">Stop Freq</div>
<div class="ab" style="left:763px;top:526px;width:1px;height:22px;background:#b4b4b4"></div>
<div class="t" style="left:763px;width:157px;text-align:center;top:531px;font-size:14px;color:#111">Max Power</div>
<div class="ab" style="left:920px;top:526px;width:1px;height:22px;background:#b4b4b4"></div>
<div class="t" style="left:910px;width:158px;text-align:center;top:531px;font-size:14px;color:#111">Limit</div>
<div class="ab" style="left:1078px;top:526px;width:1px;height:22px;background:#b4b4b4"></div>
<div class="t" style="left:1068px;width:159px;text-align:center;top:531px;font-size:14px;color:#111">Verdict</div>
<div class="ab" style="left:289px;top:548px;width:948px;height:24px;background:#ffffff;border-top:1px solid #a0a0a0"></div>
<div class="ab" style="left:447px;top:548px;width:1px;height:24px;background:#a0a0a0"></div>
<div class="ab" style="left:605px;top:548px;width:1px;height:24px;background:#a0a0a0"></div>
<div class="ab" style="left:763px;top:548px;width:1px;height:24px;background:#a0a0a0"></div>
<div class="ab" style="left:920px;top:548px;width:1px;height:24px;background:#a0a0a0"></div>
<div class="ab" style="left:1078px;top:548px;width:1px;height:24px;background:#a0a0a0"></div>
<div class="t" style="left:294px;top:555px;font-size:14px;color:#2e8b2e">1</div>
<div class="t" style="left:452px;top:555px;font-size:14px;color:#2e8b2e">0.009MHz</div>
<div class="t" style="left:610px;top:555px;font-size:14px;color:#2e8b2e">0.15MHz</div>
<div class="t" style="left:768px;top:555px;font-size:14px;color:#2e8b2e">-41.52</div>
<div class="t" style="left:925px;top:555px;font-size:14px;color:#2e8b2e">-36</div>
<div class="t" style="left:1083px;top:555px;font-size:14px;color:#2e8b2e">PASS</div>
<div class="ab" style="left:289px;top:572px;width:948px;height:24px;background:#e0e0e0;border-top:1px solid #a0a0a0"></div>
<div class="ab" style="left:447px;top:572px;width:1px;height:24px;background:#a0a0a0"></div>
<div class="ab" style="left:605px;top:572px;width:1px;height:24px;background:#a0a0a0"></div>
<div class="ab" style="left:763px;top:572px;width:1px;height:24px;background:#a0a0a0"></div>
<div class="ab" style="left:920px;top:572px;width:1px;height:24px;background:#a0a0a0"></div>
<div class="ab" style="left:1078px;top:572px;width:1px;height:24px;background:#a0a0a0"></div>
<div class="t" style="left:294px;top:579px;font-size:14px;color:#2e8b2e">2</div>
<div class="t" style="left:452px;top:579px;font-size:14px;color:#2e8b2e">0.15MHz</div>
<div class="t" style="left:610px;top:579px;font-size:14px;color:#2e8b2e">30MHz</div>
<div class="t" style="left:768px;top:579px;font-size:14px;color:#2e8b2e">-45.16</div>
<div class="t" style="left:925px;top:579px;font-size:14px;color:#2e8b2e">-36</div>
<div class="t" style="left:1083px;top:579px;font-size:14px;color:#2e8b2e">PASS</div>
<div class="ab" style="left:289px;top:596px;width:948px;height:24px;background:#ffffff;border-top:1px solid #a0a0a0"></div>
<div class="ab" style="left:447px;top:596px;width:1px;height:24px;background:#a0a0a0"></div>
<div class="ab" style="left:605px;top:596px;width:1px;height:24px;background:#a0a0a0"></div>
<div class="ab" style="left:763px;top:596px;width:1px;height:24px;background:#a0a0a0"></div>
<div class="ab" style="left:920px;top:596px;width:1px;height:24px;background:#a0a0a0"></div>
<div class="ab" style="left:1078px;top:596px;width:1px;height:24px;background:#a0a0a0"></div>
<div class="t" style="left:294px;top:603px;font-size:14px;color:#2e8b2e">3</div>
<div class="t" style="left:452px;top:603px;font-size:14px;color:#2e8b2e">30MHz</div>
<div class="t" style="left:610px;top:603px;font-size:14px;color:#2e8b2e">400MHz</div>
<div class="t" style="left:768px;top:603px;font-size:14px;color:#2e8b2e">-41.41</div>
<div class="t" style="left:925px;top:603px;font-size:14px;color:#2e8b2e">-36</div>
<div class="t" style="left:1083px;top:603px;font-size:14px;color:#2e8b2e">PASS</div>
<div class="ab" style="left:289px;top:620px;width:948px;height:24px;background:#e0e0e0;border-top:1px solid #a0a0a0"></div>
<div class="ab" style="left:447px;top:620px;width:1px;height:24px;background:#a0a0a0"></div>
<div class="ab" style="left:605px;top:620px;width:1px;height:24px;background:#a0a0a0"></div>
<div class="ab" style="left:763px;top:620px;width:1px;height:24px;background:#a0a0a0"></div>
<div class="ab" style="left:920px;top:620px;width:1px;height:24px;background:#a0a0a0"></div>
<div class="ab" style="left:1078px;top:620px;width:1px;height:24px;background:#a0a0a0"></div>
<div class="t" style="left:294px;top:627px;font-size:14px;color:#2e8b2e">4</div>
<div class="t" style="left:452px;top:627px;font-size:14px;color:#2e8b2e">400MHz</div>
<div class="t" style="left:610px;top:627px;font-size:14px;color:#2e8b2e">1000MHz</div>
<div class="t" style="left:768px;top:627px;font-size:14px;color:#2e8b2e">-45.06</div>
<div class="t" style="left:925px;top:627px;font-size:14px;color:#2e8b2e">-36</div>
<div class="t" style="left:1083px;top:627px;font-size:14px;color:#2e8b2e">PASS</div>
<div class="ab" style="left:289px;top:644px;width:948px;height:24px;background:#ffffff;border-top:1px solid #a0a0a0"></div>
<div class="ab" style="left:447px;top:644px;width:1px;height:24px;background:#a0a0a0"></div>
<div class="ab" style="left:605px;top:644px;width:1px;height:24px;background:#a0a0a0"></div>
<div class="ab" style="left:763px;top:644px;width:1px;height:24px;background:#a0a0a0"></div>
<div class="ab" style="left:920px;top:644px;width:1px;height:24px;background:#a0a0a0"></div>
<div class="ab" style="left:1078px;top:644px;width:1px;height:24px;background:#a0a0a0"></div>
<div class="t" style="left:294px;top:651px;font-size:14px;color:#2e8b2e">5</div>
<div class="t" style="left:452px;top:651px;font-size:14px;color:#2e8b2e">1000MHz</div>
<div class="t" style="left:610px;top:651px;font-size:14px;color:#2e8b2e">1908MHz</div>
<div class="t" style="left:768px;top:651px;font-size:14px;color:#2e8b2e">-26.1</div>
<div class="t" style="left:925px;top:651px;font-size:14px;color:#2e8b2e">-25</div>
<div class="t" style="left:1083px;top:651px;font-size:14px;color:#2e8b2e">PASS</div>
<div class="ab" style="left:289px;top:668px;width:948px;height:24px;background:#e0e0e0;border-top:1px solid #a0a0a0"></div>
<div class="ab" style="left:447px;top:668px;width:1px;height:24px;background:#a0a0a0"></div>
<div class="ab" style="left:605px;top:668px;width:1px;height:24px;background:#a0a0a0"></div>
<div class="ab" style="left:763px;top:668px;width:1px;height:24px;background:#a0a0a0"></div>
<div class="ab" style="left:920px;top:668px;width:1px;height:24px;background:#a0a0a0"></div>
<div class="ab" style="left:1078px;top:668px;width:1px;height:24px;background:#a0a0a0"></div>
<div class="t" style="left:294px;top:675px;font-size:14px;color:#2e8b2e">6</div>
<div class="t" style="left:452px;top:675px;font-size:14px;color:#2e8b2e">1908MHz</div>
<div class="t" style="left:610px;top:675px;font-size:14px;color:#2e8b2e">1964.5MHz</div>
<div class="t" style="left:768px;top:675px;font-size:14px;color:#2e8b2e">-29.75</div>
<div class="t" style="left:925px;top:675px;font-size:14px;color:#2e8b2e">-25</div>
<div class="t" style="left:1083px;top:675px;font-size:14px;color:#2e8b2e">PASS</div>
<div class="ab" style="left:289px;top:692px;width:948px;height:24px;background:#ffffff;border-top:1px solid #a0a0a0"></div>
<div class="ab" style="left:447px;top:692px;width:1px;height:24px;background:#a0a0a0"></div>
<div class="ab" style="left:605px;top:692px;width:1px;height:24px;background:#a0a0a0"></div>
<div class="ab" style="left:763px;top:692px;width:1px;height:24px;background:#a0a0a0"></div>
<div class="ab" style="left:920px;top:692px;width:1px;height:24px;background:#a0a0a0"></div>
<div class="ab" style="left:1078px;top:692px;width:1px;height:24px;background:#a0a0a0"></div>
<div class="t" style="left:294px;top:699px;font-size:14px;color:#2e8b2e">7</div>
<div class="t" style="left:452px;top:699px;font-size:14px;color:#2e8b2e">1990.5MHz</div>
<div class="t" style="left:610px;top:699px;font-size:14px;color:#2e8b2e">1992MHz</div>
<div class="t" style="left:768px;top:699px;font-size:14px;color:#2e8b2e">-33.39</div>
<div class="t" style="left:925px;top:699px;font-size:14px;color:#2e8b2e">-25</div>
<div class="t" style="left:1083px;top:699px;font-size:14px;color:#2e8b2e">PASS</div>
<div class="ab" style="left:289px;top:716px;width:948px;height:24px;background:#e0e0e0;border-top:1px solid #a0a0a0"></div>
<div class="ab" style="left:447px;top:716px;width:1px;height:24px;background:#a0a0a0"></div>
<div class="ab" style="left:605px;top:716px;width:1px;height:24px;background:#a0a0a0"></div>
<div class="ab" style="left:763px;top:716px;width:1px;height:24px;background:#a0a0a0"></div>
<div class="ab" style="left:920px;top:716px;width:1px;height:24px;background:#a0a0a0"></div>
<div class="ab" style="left:1078px;top:716px;width:1px;height:24px;background:#a0a0a0"></div>
<div class="t" style="left:294px;top:723px;font-size:14px;color:#2e8b2e">8</div>
<div class="t" style="left:452px;top:723px;font-size:14px;color:#2e8b2e">1992MHz</div>
<div class="t" style="left:610px;top:723px;font-size:14px;color:#2e8b2e">2000MHz</div>
<div class="t" style="left:768px;top:723px;font-size:14px;color:#2e8b2e">-37.04</div>
<div class="t" style="left:925px;top:723px;font-size:14px;color:#2e8b2e">-25</div>
<div class="t" style="left:1083px;top:723px;font-size:14px;color:#2e8b2e">PASS</div>
<div class="ab" style="left:289px;top:740px;width:948px;height:24px;background:#ffffff;border-top:1px solid #a0a0a0"></div>
<div class="ab" style="left:447px;top:740px;width:1px;height:24px;background:#a0a0a0"></div>
<div class="ab" style="left:605px;top:740px;width:1px;height:24px;background:#a0a0a0"></div>
<div class="ab" style="left:763px;top:740px;width:1px;height:24px;background:#a0a0a0"></div>
<div class="ab" style="left:920px;top:740px;width:1px;height:24px;background:#a0a0a0"></div>
<div class="ab" style="left:1078px;top:740px;width:1px;height:24px;background:#a0a0a0"></div>
<div class="t" style="left:294px;top:747px;font-size:14px;color:#2e8b2e">9</div>
<div class="t" style="left:452px;top:747px;font-size:14px;color:#2e8b2e">2000MHz</div>
<div class="t" style="left:610px;top:747px;font-size:14px;color:#2e8b2e">6000MHz</div>
<div class="t" style="left:768px;top:747px;font-size:14px;color:#2e8b2e">-29.31</div>
<div class="t" style="left:925px;top:747px;font-size:14px;color:#2e8b2e">-25</div>
<div class="t" style="left:1083px;top:747px;font-size:14px;color:#2e8b2e">PASS</div>
<div class="ab" style="left:289px;top:764px;width:948px;height:24px;background:#0078d7;border-top:1px solid #a0a0a0"></div>
<div class="ab" style="left:447px;top:764px;width:1px;height:24px;background:#a0a0a0"></div>
<div class="ab" style="left:605px;top:764px;width:1px;height:24px;background:#a0a0a0"></div>
<div class="ab" style="left:763px;top:764px;width:1px;height:24px;background:#a0a0a0"></div>
<div class="ab" style="left:920px;top:764px;width:1px;height:24px;background:#a0a0a0"></div>
<div class="ab" style="left:1078px;top:764px;width:1px;height:24px;background:#a0a0a0"></div>
<div class="t" style="left:294px;top:771px;font-size:14px;color:#ffffff">10</div>
<div class="t" style="left:452px;top:771px;font-size:14px;color:#ffffff">6000MHz</div>
<div class="t" style="left:610px;top:771px;font-size:14px;color:#ffffff">12750MHz</div>
<div class="t" style="left:768px;top:771px;font-size:14px;color:#ffffff">-32.96</div>
<div class="t" style="left:925px;top:771px;font-size:14px;color:#ffffff">-25</div>
<div class="t" style="left:1083px;top:771px;font-size:14px;color:#ffffff">PASS</div>
<div class="ab" style="left:1243px;top:523px;width:668px;height:293px;border:1px solid #6e6e6e;background:#f0f0f0"></div>
<svg class="ab" style="left:1336px;top:525px" width="480" height="289" viewBox="1336 525 480 289" font-family="Liberation Sans, sans-serif"><rect x="1336" y="525" width="480" height="289" fill="#ffffff"/><defs><linearGradient id="sptb" x1="0" y1="0" x2="1" y2="0"><stop offset="0" stop-color="#b4c4d8"/><stop offset="0.5" stop-color="#a8bcd6"/><stop offset="1" stop-color="#9cb4d4"/></linearGradient></defs><rect x="1336" y="525" width="480" height="9" fill="url(#sptb)"/><rect x="1337" y="526" width="6" height="7" fill="#c86060"/><text x="1345" y="532.5" font-size="5.5" fill="#3a4a78">Keysight Spectrum Analyzer - Swept SA</text><rect x="1779" y="526" width="11" height="7" fill="#b8c8dc"/><rect x="1791" y="526" width="11" height="7" fill="#a8bcd8"/><rect x="1803" y="526" width="13" height="7" fill="#d05050"/><rect x="1336" y="534" width="395" height="7" fill="#fff" stroke="#bbb" stroke-width="0.5"/><rect x="1336" y="534" width="6" height="7" fill="#20b020"/><line x1="1373" y1="534" x2="1373" y2="541" stroke="#c8c8c8" stroke-width="0.6"/><line x1="1404" y1="534" x2="1404" y2="541" stroke="#c8c8c8" stroke-width="0.6"/><line x1="1464" y1="534" x2="1464" y2="541" stroke="#c8c8c8" stroke-width="0.6"/><line x1="1497" y1="534" x2="1497" y2="541" stroke="#c8c8c8" stroke-width="0.6"/><line x1="1555" y1="534" x2="1555" y2="541" stroke="#c8c8c8" stroke-width="0.6"/><line x1="1570" y1="534" x2="1570" y2="541" stroke="#c8c8c8" stroke-width="0.6"/><line x1="1652" y1="534" x2="1652" y2="541" stroke="#c8c8c8" stroke-width="0.6"/><text x="1346" y="539.6" font-size="4.5" fill="#999">R L</text><text x="1386" y="539.6" font-size="4.5" fill="#999">RF</text><text x="1410" y="539.6" font-size="4.5" fill="#999">50 &#937;   DC</text><text x="1498" y="539.6" font-size="4.5" fill="#999">SENSE:INT</text><path d="M1565 540.5L1567.5 535.5L1570 540.5Z" fill="#e8c800" stroke="#333" stroke-width="0.3"/><text x="1571" y="539.6" font-size="4.5" fill="#aaa">ALIGN OFF</text><text x="1673" y="539.6" font-size="4.5" fill="#777">02:15:09 PM Jan 06, 2020</text><rect x="1336.5" y="541" width="140" height="8.5" fill="#fff" stroke="#999" stroke-width="0.6"/><text x="1337.5" y="548" font-size="8" font-weight="bold" fill="#111">Center Freq 515.000000 MHz</text><text x="1463" y="553.5" font-size="5" fill="#333">PNO: Fast</text><text x="1462" y="559" font-size="5" fill="#333">IFGain:Low</text><path d="M1490 551.5H1504" stroke="#333" stroke-width="0.7"/><circle cx="1497" cy="551.5" r="1.2" fill="#222"/><text x="1511" y="553" font-size="5.5" font-weight="bold" fill="#222">Trig: Free Run</text><text x="1511" y="558.5" font-size="5.5" font-weight="bold" fill="#222">#Atten: 10 dB</text><text x="1585" y="545.5" font-size="5.5" font-weight="bold" fill="#222">Avg Type: RMS</text><text x="1686" y="545" font-size="4" fill="#555">TRACE</text><text x="1704" y="545.5" font-size="4.5" fill="#333">1 2 3 4 5 6</text><text x="1692" y="550" font-size="4" fill="#555">TYPE</text><text x="1704" y="550.5" font-size="4.5" fill="#555">WWWWWW</text><text x="1694" y="555" font-size="4" fill="#555">DET</text><text x="1704" y="555.5" font-size="4.5" fill="#555">A N N N N N</text><line x1="1703" y1="541" x2="1703" y2="557" stroke="#999" stroke-width="0.5"/><text x="1728" y="571" font-size="9" font-weight="bold" fill="#111" text-anchor="end">Mkr1 55.22 MHz</text><text x="1728" y="579" font-size="9" font-weight="bold" fill="#111" text-anchor="end">-80.45 dBm</text><text x="1337" y="580.5" font-size="6" font-weight="bold" fill="#222">10 dB/div</text><text x="1337" y="586" font-size="6.5" font-weight="bold" fill="#222">Log</text><text x="1375" y="581" font-size="7.3" font-weight="bold" fill="#111">Ref 0.00 dBm</text><line x1="1389.8" y1="585.5" x2="1389.8" y2="782" stroke="#707070" stroke-width="0.7"/><line x1="1352.2" y1="605.1" x2="1728.4" y2="605.1" stroke="#707070" stroke-width="0.7"/><text x="1350" y="607.1" font-size="5.5" fill="#777" text-anchor="end">-10.0</text><line x1="1427.4" y1="585.5" x2="1427.4" y2="782" stroke="#707070" stroke-width="0.7"/><line x1="1352.2" y1="624.8" x2="1728.4" y2="624.8" stroke="#707070" stroke-width="0.7"/><text x="1350" y="626.8" font-size="5.5" fill="#777" text-anchor="end">-20.0</text><line x1="1465.1" y1="585.5" x2="1465.1" y2="782" stroke="#707070" stroke-width="0.7"/><line x1="1352.2" y1="644.5" x2="1728.4" y2="644.5" stroke="#707070" stroke-width="0.7"/><text x="1350" y="646.5" font-size="5.5" fill="#777" text-anchor="end">-30.0</text><line x1="1502.7" y1="585.5" x2="1502.7" y2="782" stroke="#707070" stroke-width="0.7"/><line x1="1352.2" y1="664.1" x2="1728.4" y2="664.1" stroke="#707070" stroke-width="0.7"/><text x="1350" y="666.1" font-size="5.5" fill="#777" text-anchor="end">-40.0</text><line x1="1540.3" y1="585.5" x2="1540.3" y2="782" stroke="#707070" stroke-width="0.7"/><line x1="1352.2" y1="683.8" x2="1728.4" y2="683.8" stroke="#707070" stroke-width="0.7"/><text x="1350" y="685.8" font-size="5.5" fill="#777" text-anchor="end">-50.0</text><line x1="1577.9" y1="585.5" x2="1577.9" y2="782" stroke="#707070" stroke-width="0.7"/><line x1="1352.2" y1="703.4" x2="1728.4" y2="703.4" stroke="#707070" stroke-width="0.7"/><text x="1350" y="705.4" font-size="5.5" fill="#777" text-anchor="end">-60.0</text><line x1="1615.5" y1="585.5" x2="1615.5" y2="782" stroke="#707070" stroke-width="0.7"/><line x1="1352.2" y1="723.0" x2="1728.4" y2="723.0" stroke="#707070" stroke-width="0.7"/><text x="1350" y="725.0" font-size="5.5" fill="#777" text-anchor="end">-70.0</text><line x1="1653.2" y1="585.5" x2="1653.2" y2="782" stroke="#707070" stroke-width="0.7"/><line x1="1352.2" y1="742.7" x2="1728.4" y2="742.7" stroke="#707070" stroke-width="0.7"/><text x="1350" y="744.7" font-size="5.5" fill="#777" text-anchor="end">-80.0</text><line x1="1690.8" y1="585.5" x2="1690.8" y2="782" stroke="#707070" stroke-width="0.7"/><line x1="1352.2" y1="762.4" x2="1728.4" y2="762.4" stroke="#707070" stroke-width="0.7"/><text x="1350" y="764.4" font-size="5.5" fill="#777" text-anchor="end">-90.0</text><rect x="1352.2" y="585.5" width="376.2" height="196.5" fill="none" stroke="#111" stroke-width="1.2"/><path d="M1538.5 585L1542.5 585L1540.5 588Z" fill="#111"/><path d="M1538.5 781.6L1542.5 781.6L1540.5 778.6Z" fill="#111"/><polyline points="1352.2,769.6 1353.2,767.6 1354.2,765.6 1355.2,763.6 1356.2,769.5 1357.2,769.2 1358.2,768.7 1359.2,769.0 1360.2,765.1 1361.2,754.2 1362.2,741.0 1363.2,745.0 1364.2,759.8 1365.2,756.4 1366.2,752.3 1367.2,760.0 1368.2,767.5 1369.2,768.0 1370.2,763.6 1371.2,757.2 1372.2,751.1 1373.2,749.1 1374.2,753.3 1375.2,759.8 1376.2,754.2 1377.2,751.2 1378.2,757.5 1379.2,765.6 1380.2,766.7 1381.2,762.3 1382.2,760.2 1383.2,764.3 1384.2,768.2 1385.2,765.0 1386.2,763.2 1387.2,766.6 1388.2,769.3 1389.2,769.1 1390.2,768.9 1391.2,769.3 1392.2,769.1 1393.2,768.9 1394.2,769.6 1395.2,769.5 1396.2,768.7 1397.2,769.3 1398.2,769.2 1399.2,769.7 1400.2,769.5 1401.2,768.8 1402.2,769.9 1403.2,768.5 1404.2,769.0 1405.2,769.5 1406.2,768.5 1407.2,769.0 1408.2,768.3 1409.2,769.3 1410.2,769.5 1411.2,769.1 1412.2,769.6 1413.2,768.7 1414.2,769.3 1415.2,769.1 1416.2,769.1 1417.2,768.9 1418.2,769.5 1419.2,769.7 1420.2,768.9 1421.2,769.2 1422.2,768.2 1423.2,769.3 1424.2,769.2 1425.2,769.7 1426.2,769.4 1427.2,768.6 1428.2,768.7 1429.2,769.2 1430.2,768.1 1431.2,768.8 1432.2,768.3 1433.2,768.2 1434.2,768.1 1435.2,769.3 1436.2,768.2 1437.2,768.4 1438.2,768.6 1439.2,769.4 1440.2,768.1 1441.2,768.7 1442.2,768.9 1443.2,769.4 1444.2,769.3 1445.2,769.3 1446.2,768.4 1447.2,768.6 1448.2,768.5 1449.2,769.3 1450.2,769.5 1451.2,768.2 1452.2,768.2 1453.2,768.3 1454.2,768.3 1455.2,768.7 1456.2,768.8 1457.2,768.3 1458.2,767.9 1459.2,768.5 1460.2,768.4 1461.2,768.7 1462.2,769.3 1463.2,768.9 1464.2,768.6 1465.2,768.8 1466.2,768.9 1467.2,767.9 1468.2,769.2 1469.2,769.0 1470.2,769.2 1471.2,769.0 1472.2,768.4 1473.2,768.4 1474.2,767.9 1475.2,768.7 1476.2,767.8 1477.2,767.8 1478.2,768.0 1479.2,767.9 1480.2,768.2 1481.2,767.8 1482.2,767.7 1483.2,767.9 1484.2,767.8 1485.2,768.2 1486.2,767.7 1487.2,769.0 1488.2,768.6 1489.2,767.8 1490.2,768.0 1491.2,768.1 1492.2,768.2 1493.2,767.8 1494.2,768.9 1495.2,769.1 1496.2,768.3 1497.2,768.3 1498.2,767.7 1499.2,767.7 1500.2,768.1 1501.2,767.9 1502.2,768.8 1503.2,767.8 1504.2,767.5 1505.2,769.0 1506.2,768.3 1507.2,767.7 1508.2,768.3 1509.2,767.5 1510.2,768.3 1511.2,769.0 1512.2,768.8 1513.2,768.5 1514.2,767.8 1515.2,768.0 1516.2,767.7 1517.2,768.6 1518.2,768.2 1519.2,768.6 1520.2,767.9 1521.2,767.7 1522.2,768.6 1523.2,768.9 1524.2,768.7 1525.2,768.6 1526.2,768.6 1527.2,768.5 1528.2,767.7 1529.2,768.1 1530.2,767.8 1531.2,767.3 1532.2,767.3 1533.2,767.7 1534.2,767.7 1535.2,768.3 1536.2,768.8 1537.2,767.9 1538.2,768.7 1539.2,768.8 1540.2,768.7 1541.2,767.8 1542.2,767.5 1543.2,767.5 1544.2,767.5 1545.2,767.5 1546.2,768.2 1547.2,768.6 1548.2,768.5 1549.2,767.9 1550.2,768.2 1551.2,768.4 1552.2,767.2 1553.2,768.2 1554.2,768.5 1555.2,768.3 1556.2,768.3 1557.2,767.8 1558.2,767.3 1559.2,768.3 1560.2,767.6 1561.2,768.3 1562.2,768.6 1563.2,767.6 1564.2,767.7 1565.2,768.5 1566.2,768.2 1567.2,767.3 1568.2,767.2 1569.2,767.2 1570.2,768.4 1571.2,768.2 1572.2,767.2 1573.2,768.3 1574.2,768.5 1575.2,768.0 1576.2,767.5 1577.2,767.8 1578.2,767.1 1579.2,766.9 1580.2,768.4 1581.2,767.9 1582.2,767.7 1583.2,768.4 1584.2,767.5 1585.2,768.2 1586.2,768.2 1587.2,767.2 1588.2,767.2 1589.2,767.3 1590.2,767.2 1591.2,767.7 1592.2,767.2 1593.2,767.4 1594.2,767.0 1595.2,768.2 1596.2,767.3 1597.2,767.5 1598.2,767.7 1599.2,768.2 1600.2,767.4 1601.2,768.2 1602.2,767.5 1603.2,767.5 1604.2,767.5 1605.2,766.7 1606.2,767.4 1607.2,767.0 1608.2,766.7 1609.2,767.9 1610.2,766.9 1611.2,767.4 1612.2,767.8 1613.2,767.5 1614.2,767.1 1615.2,767.4 1616.2,767.5 1617.2,767.8 1618.2,766.7 1619.2,767.5 1620.2,767.0 1621.2,767.0 1622.2,767.8 1623.2,767.4 1624.2,767.4 1625.2,767.7 1626.2,768.0 1627.2,767.2 1628.2,767.5 1629.2,767.3 1630.2,767.3 1631.2,767.6 1632.2,767.2 1633.2,767.3 1634.2,767.2 1635.2,767.9 1636.2,767.6 1637.2,767.8 1638.2,767.9 1639.2,766.8 1640.2,767.3 1641.2,767.9 1642.2,767.7 1643.2,766.6 1644.2,766.6 1645.2,767.1 1646.2,766.5 1647.2,766.7 1648.2,766.5 1649.2,767.4 1650.2,767.6 1651.2,767.7 1652.2,766.6 1653.2,767.4 1654.2,767.3 1655.2,766.5 1656.2,767.7 1657.2,767.8 1658.2,766.6 1659.2,767.8 1660.2,766.9 1661.2,767.0 1662.2,767.8 1663.2,767.6 1664.2,766.5 1665.2,766.9 1666.2,767.0 1667.2,766.7 1668.2,766.5 1669.2,766.7 1670.2,767.3 1671.2,766.2 1672.2,767.0 1673.2,766.8 1674.2,766.2 1675.2,766.7 1676.2,767.1 1677.2,766.9 1678.2,766.0 1679.2,765.6 1680.2,764.6 1681.2,766.5 1682.2,766.2 1683.2,766.5 1684.2,766.1 1685.2,767.3 1686.2,766.5 1687.2,766.2 1688.2,766.7 1689.2,767.5 1690.2,767.3 1691.2,766.4 1692.2,766.2 1693.2,767.4 1694.2,766.9 1695.2,767.1 1696.2,766.1 1697.2,766.0 1698.2,767.0 1699.2,766.6 1700.2,766.0 1701.2,767.4 1702.2,766.9 1703.2,767.2 1704.2,766.0 1705.2,765.7 1706.2,763.2 1707.2,766.8 1708.2,766.6 1709.2,766.4 1710.2,765.8 1711.2,755.7 1712.2,760.6 1713.2,765.9 1714.2,766.7 1715.2,766.2 1716.2,766.0 1717.2,766.0 1718.2,765.9 1719.2,766.1 1720.2,766.3 1721.2,766.2 1722.2,767.0 1723.2,766.2 1724.2,766.5 1725.2,766.0 1726.2,766.3 1727.2,765.7 1728.2,766.1" fill="none" stroke="#111" stroke-width="0.7"/><path d="M1362 734L1364.5 739L1362 744L1359.5 739Z" fill="#111"/><text x="1365" y="737" font-size="6" fill="#111">1</text><text x="1337" y="790" font-size="7.3" font-weight="bold" fill="#111">Start 0.0300 GHz</text><text x="1337" y="798" font-size="7.3" font-weight="bold" fill="#111">#Res BW 100 kHz</text><text x="1489" y="798" font-size="7" font-weight="bold" fill="#111">#VBW 300 kHz*</text><text x="1728" y="790" font-size="7.3" font-weight="bold" fill="#111" text-anchor="end">Stop 1.0000 GHz</text><text x="1728" y="798" font-size="7.3" font-weight="bold" fill="#111" text-anchor="end">#Sweep  3.000 s (1001 pts)</text><line x1="1336" y1="802.5" x2="1816" y2="802.5" stroke="#ddd" stroke-width="0.6"/><text x="1337" y="809" font-size="4.5" fill="#999">MSG</text><circle cx="1352" cy="807.5" r="3" fill="#d02020"/><path d="M1350.5 806L1353.5 809M1353.5 806L1350.5 809" stroke="#fff" stroke-width="0.8"/><text x="1356.5" y="809.5" font-size="6.2" fill="#555">Illegal parameter value;This model is always DC coupled</text><line x1="1637" y1="803" x2="1637" y2="812" stroke="#ddd" stroke-width="0.6"/><text x="1638" y="809" font-size="4.5" fill="#999">STATUS</text><circle cx="1661" cy="807.5" r="3" fill="#d02020"/><path d="M1659.5 806L1662.5 809M1662.5 806L1659.5 809" stroke="#fff" stroke-width="0.8"/><text x="1665" y="809.5" font-size="6.2" fill="#555">Align Now All required</text><rect x="1731" y="534" width="58" height="269" fill="#ececec"/><rect x="1731.8" y="534.5" width="57.5" height="14.2" fill="#fff" stroke="#555" stroke-width="0.7"/><text x="1760" y="543.5" font-size="6.3" font-weight="bold" fill="#111" text-anchor="middle">Frequency</text><rect x="1731.8" y="550" width="57.5" height="29.5" fill="#fff" stroke="#555" stroke-width="0.7"/><text x="1788.5" y="567.5" font-size="6.5" font-weight="bold" fill="#111" text-anchor="end">Auto Tune</text><rect x="1731.8" y="585.5" width="57.5" height="29.3" fill="#fff" stroke="#555" stroke-width="0.7"/><text x="1788.5" y="597.5" font-size="6.5" font-weight="bold" fill="#111" text-anchor="end">Center Freq</text><text x="1788.5" y="607" font-size="5" font-weight="bold" fill="#222" text-anchor="end">515.000000 MHz</text><rect x="1731.8" y="620.9" width="57.5" height="29.3" fill="#fff" stroke="#555" stroke-width="0.7"/><text x="1788.5" y="633" font-size="6.5" font-weight="bold" fill="#111" text-anchor="end">Start Freq</text><text x="1788.5" y="642.5" font-size="5" font-weight="bold" fill="#222" text-anchor="end">30.000000 MHz</text><rect x="1731.8" y="656.3" width="57.5" height="30.3" fill="#fff" stroke="#555" stroke-width="0.7"/><text x="1788.5" y="668.5" font-size="6.5" font-weight="bold" fill="#111" text-anchor="end">Stop Freq</text><text x="1788.5" y="678" font-size="5" font-weight="bold" fill="#222" text-anchor="end">1.000000000 GHz</text><rect x="1731.8" y="691.8" width="57.5" height="29.6" fill="#fff" stroke="#555" stroke-width="0.7"/><text x="1788.5" y="701.5" font-size="6.5" font-weight="bold" fill="#111" text-anchor="end">CF Step</text><text x="1788.5" y="709.5" font-size="5" font-weight="bold" fill="#222" text-anchor="end">97.000000 MHz</text><text x="1732.5" y="716.5" font-size="5" fill="#222">Auto</text><text x="1788.5" y="716.5" font-size="5" font-weight="bold" fill="#222" text-anchor="end">Man</text><rect x="1731.8" y="727.3" width="57.5" height="30.3" fill="#fff" stroke="#555" stroke-width="0.7"/><text x="1788.5" y="740" font-size="6.5" font-weight="bold" fill="#111" text-anchor="end">Freq Offset</text><text x="1788.5" y="749.5" font-size="5" font-weight="bold" fill="#222" text-anchor="end">0 Hz</text><rect x="1731.8" y="763.5" width="57.5" height="29.5" fill="#fff" stroke="#555" stroke-width="0.7"/><text x="1788.5" y="773.5" font-size="6.5" font-weight="bold" fill="#111" text-anchor="end">Scale Type</text><text x="1732.5" y="787" font-size="5" fill="#222">Log</text><text x="1788.5" y="787" font-size="5" font-weight="bold" fill="#222" text-anchor="end">Lin</text><rect x="1789" y="534" width="27" height="268" fill="#2a5aa0"/><rect x="1789.5" y="536.3" width="26" height="15.5" fill="#3d4045"/><text x="1791" y="542.0" font-size="4" font-weight="bold" fill="#c8ccd4">Mode</text><rect x="1789.5" y="555.4" width="26" height="15.5" fill="#3d4045"/><text x="1791" y="561.1" font-size="4" font-weight="bold" fill="#c8ccd4">Mode</text><text x="1791" y="566.1" font-size="4" font-weight="bold" fill="#c8ccd4">Setup</text><rect x="1789.5" y="574.5" width="26" height="15.5" fill="#3d4045"/><text x="1791" y="580.2" font-size="4" font-weight="bold" fill="#c8ccd4">Meas</text><rect x="1789.5" y="593.6" width="26" height="15.5" fill="#3d4045"/><text x="1791" y="599.3" font-size="4" font-weight="bold" fill="#c8ccd4">Marker →</text><rect x="1789.5" y="612.7" width="26" height="15.5" fill="#3d4045"/><text x="1791" y="618.4" font-size="4" font-weight="bold" fill="#c8ccd4">Marker</text><text x="1791" y="623.4" font-size="4" font-weight="bold" fill="#c8ccd4">Function</text><rect x="1789.5" y="631.8" width="26" height="15.5" fill="#3d4045"/><text x="1791" y="637.5" font-size="4" font-weight="bold" fill="#c8ccd4">Single</text><rect x="1789.5" y="650.9" width="26" height="15.5" fill="#3d4045"/><text x="1791" y="656.6" font-size="4" font-weight="bold" fill="#c8ccd4">Cont</text><rect x="1789.5" y="670.0" width="26" height="15.5" fill="#3d4045"/><text x="1791" y="675.7" font-size="4" font-weight="bold" fill="#c8ccd4">SPAN</text><text x="1791" y="680.7" font-size="4" font-weight="bold" fill="#c8ccd4">X</text><text x="1791" y="685.7" font-size="4" font-weight="bold" fill="#c8ccd4">Scale</text><rect x="1789.5" y="689.1" width="26" height="15.5" fill="#3d4045"/><text x="1791" y="694.8" font-size="4" font-weight="bold" fill="#c8ccd4">Auto</text><text x="1791" y="699.8" font-size="4" font-weight="bold" fill="#c8ccd4">Couple</text><rect x="1789.5" y="708.2" width="26" height="15.5" fill="#3d4045"/><text x="1791" y="713.9" font-size="4" font-weight="bold" fill="#c8ccd4">Source</text><rect x="1789.5" y="727.3" width="26" height="15.5" fill="#3d4045"/><text x="1791" y="733.0" font-size="4" font-weight="bold" fill="#c8ccd4">File</text><rect x="1789.5" y="746.4" width="26" height="15.5" fill="#3d4045"/><text x="1791" y="752.1" font-size="4" font-weight="bold" fill="#c8ccd4">Print</text><rect x="1789.5" y="765.5" width="26" height="15.5" fill="#3d4045"/><text x="1791" y="771.2" font-size="4" font-weight="bold" fill="#c8ccd4">Full</text><text x="1791" y="776.2" font-size="4" font-weight="bold" fill="#c8ccd4">Screen</text><rect x="1789.5" y="784.6" width="26" height="15.5" fill="#3d4045"/><text x="1791" y="790.3" font-size="4" font-weight="bold" fill="#c8ccd4">Return</text></svg>
<div class="ab" style="left:284px;top:819px;width:1631px;height:1px;background:#6a6a6a"></div>
<div class="ab" style="left:1913px;top:219px;width:1px;height:601px;background:#6a6a6a"></div>
<div class="ab" style="left:282px;top:820px;width:1638px;height:7px;background:#f2f2f4;border-top:1px solid #fcfcfc"></div>
<div class="ab" style="left:0;top:825px;width:282px;height:2px;background:#eef0f2"></div>
<div class="ab" style="left:0;top:827px;width:1920px;height:183px;background:#e8e9ed"></div>
<div class="ab" style="left:2px;top:827px;width:1916px;height:183px;border:1px solid #c2c6cc;border-radius:1px"></div>
<div class="ab" style="left:3px;top:828px;width:1914px;height:18px;background:linear-gradient(#e6e7eb,#dfe0e5)"></div>
<div class="t" style="left:8px;top:831px;font-size:13.5px;font-weight:bold;color:#a6a8ac">Output</div>
<svg class="ab" style="left:1877px;top:832px" width="10" height="11"><rect x="2.5" y="0.5" width="5" height="6" fill="none" stroke="#555" stroke-width="1"/><rect x="5" y="1" width="2" height="5" fill="#555"/><path d="M1 7H9M5 7V11" stroke="#555" stroke-width="1.2"/></svg>
<svg class="ab" style="left:1899px;top:833px" width="10" height="10"><path d="M1 1L9 9M9 1L1 9" stroke="#555" stroke-width="1.8"/></svg>
<div class="ab" style="left:7px;top:848px;width:40px;height:25px;background:#fff;border:1px solid #b8bcc4;border-bottom:none"></div>
<div class="t" style="left:17px;top:854px;font-size:13px;color:#222">Log</div>
<div class="ab" style="left:5px;top:872px;width:1906px;height:132px;background:#fff;border:2px solid #a4a8b0;border-top-width:2px"></div>
<div class="ab" style="left:7px;top:874px;width:1886px;height:20px;background:linear-gradient(#fbfbfc,#eeeef0);border-bottom:1px solid #d8d8dc"></div>
<div class="ab" style="left:1893px;top:874px;width:16px;height:20px;background:linear-gradient(#fbfbfc,#eeeef0);border-bottom:1px solid #d8d8dc;border-left:1px solid #d8d8dc"></div>
<div class="ab" style="left:7px;top:874px;width:14px;height:125px;background:#f5f5f6;border-right:1px solid #d8d8dc"></div>
<div class="ab" style="left:137px;top:874px;width:1px;height:125px;background:#d8d8dc"></div>
<div class="ab" style="left:429px;top:874px;width:1px;height:125px;background:#d8d8dc"></div>
<div class="t" style="left:21px;width:116px;text-align:center;top:876px;font-size:12.5px;color:#222">No.</div>
<div class="t" style="left:137px;width:292px;text-align:center;top:876px;font-size:12.5px;color:#222">Time</div>
<div class="t" style="left:429px;width:1464px;text-align:center;top:876px;font-size:12.5px;color:#222">Msg</div>
<div class="ab" style="left:7px;top:914px;width:14px;height:1px;background:#e0e0e4"></div>
<div class="t" style="left:22px;width:111px;text-align:right;top:899px;font-size:12.5px;color:#222">87</div>
<div class="t" style="left:142px;top:899px;font-size:12.6px;color:#222">2021-12-01 21:28:23</div>
<div class="t" style="left:434px;top:899px;font-size:12px;color:#222">[SU][UXM]切换NR测试模式</div>
<div class="ab" style="left:22px;top:915px;width:1871px;height:21px;background:#dedede"></div>
<div class="ab" style="left:137px;top:915px;width:1px;height:21px;background:#cfcfd2"></div>
<div class="ab" style="left:429px;top:915px;width:1px;height:21px;background:#cfcfd2"></div>
<div class="ab" style="left:7px;top:935px;width:14px;height:1px;background:#e0e0e4"></div>
<div class="t" style="left:22px;width:111px;text-align:right;top:920px;font-size:12.5px;color:#222">88</div>
<div class="t" style="left:142px;top:920px;font-size:12.6px;color:#222">2021-12-01 21:28:25</div>
<div class="t" style="left:434px;top:920px;font-size:12px;color:#222">[SU][UXM]设置功率CHPower:NDEFault</div>
<div class="ab" style="left:7px;top:956px;width:14px;height:1px;background:#e0e0e4"></div>
<div class="t" style="left:22px;width:111px;text-align:right;top:941px;font-size:12.5px;color:#222">89</div>
<div class="t" style="left:142px;top:941px;font-size:12.6px;color:#222">2021-12-01 21:28:26</div>
<div class="t" style="left:434px;top:941px;font-size:12px;color:#222">[SU][UXM]选中CELL1</div>
<div class="ab" style="left:22px;top:957px;width:1871px;height:21px;background:#dedede"></div>
<div class="ab" style="left:137px;top:957px;width:1px;height:21px;background:#cfcfd2"></div>
<div class="ab" style="left:429px;top:957px;width:1px;height:21px;background:#cfcfd2"></div>
<div class="ab" style="left:7px;top:977px;width:14px;height:1px;background:#e0e0e4"></div>
<div class="t" style="left:22px;width:111px;text-align:right;top:962px;font-size:12.5px;color:#222">90</div>
<div class="t" style="left:142px;top:962px;font-size:12.6px;color:#222">2021-12-01 21:28:28</div>
<div class="t" style="left:434px;top:962px;font-size:12px;color:#222">[SU][UXM]设置SYNC:AUTO 1</div>
<div class="ab" style="left:7px;top:998px;width:14px;height:1px;background:#e0e0e4"></div>
<div class="t" style="left:22px;width:111px;text-align:right;top:983px;font-size:12.5px;color:#222">91</div>
<div class="t" style="left:142px;top:983px;font-size:12.6px;color:#222">2021-12-01 21:28:29</div>
<div class="t" style="left:434px;top:983px;font-size:12px;color:#222">[SU][UXM]设置SYNC:IMMediate</div>
<div class="ab" style="left:7px;top:999px;width:1886px;height:3px;background:#f4f4f6;border-top:1px solid #d0d0d4"></div>
<svg class="ab" style="left:1897px;top:898px" width="9" height="6"><path d="M0.5 5L4.5 0.5L8.5 5Z" fill="#777"/></svg>
<div class="ab" style="left:1897px;top:969px;width:9px;height:17px;border:1px solid #8a8a8e;border-radius:4px;background:linear-gradient(90deg,#f8f8f8,#e0e0e4)"></div>
<svg class="ab" style="left:1897px;top:991px" width="9" height="6"><path d="M0.5 0.5L4.5 5L8.5 0.5Z" fill="#777"/></svg>
<div class="ab" style="left:0;top:1010px;width:1920px;height:30px;background:linear-gradient(#e2e3e7,#d0d2d7)"></div>
<div class="ab" style="left:95px;top:1014px;width:1px;height:23px;background:#bfc1c6;box-shadow:1px 0 0 #eef0f2"></div>
<div class="ab" style="left:164px;top:1014px;width:1px;height:23px;background:#bfc1c6;box-shadow:1px 0 0 #eef0f2"></div>
<div class="ab" style="left:413px;top:1014px;width:1px;height:23px;background:#bfc1c6;box-shadow:1px 0 0 #eef0f2"></div>
<div class="ab" style="left:1810px;top:1014px;width:1px;height:23px;background:#bfc1c6;box-shadow:1px 0 0 #eef0f2"></div>
<div class="t" style="left:107px;top:1021px;font-size:12px;color:#222">自动测试</div>
<div class="t" style="left:1821px;top:1021px;font-size:12px;color:#222">自动化测试平台</div>
<div class="ab" style="left:0;top:1040px;width:1920px;height:8px;background:linear-gradient(90deg,#e6e8ec 0,#e6e8ec 48px,#ffffff 48px,#ffffff 391px,#e8eaee 391px,#e8eaee 736px,#dfe6ee 760px,#dce8f0 1200px,#d8e6ee 1920px)"></div>
<div class="t" style="left:1768px;top:1045px;font-size:12px;color:#333">21:28</div>
</body></html>
